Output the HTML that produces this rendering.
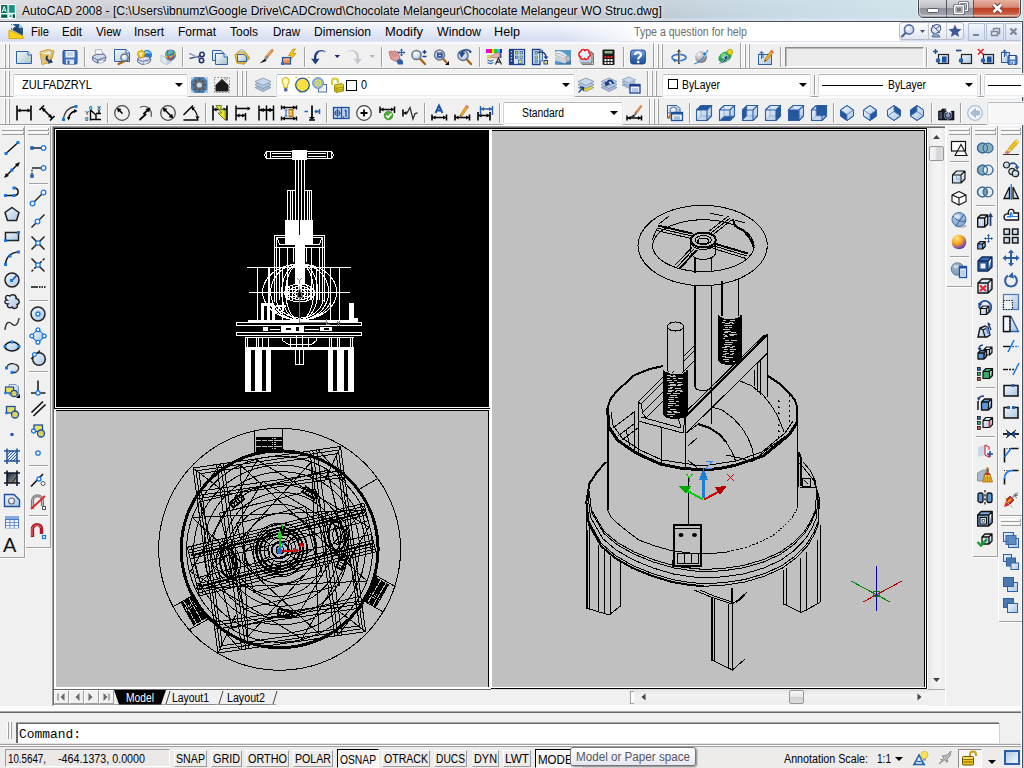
<!DOCTYPE html>
<html>
<head>
<meta charset="utf-8">
<title>AutoCAD 2008</title>
<style>
html,body{margin:0;padding:0;}
body{width:1024px;height:768px;overflow:hidden;background:#f0f0f0;font-family:"Liberation Sans",sans-serif;font-size:12px;color:#000;position:relative;}
.a{position:absolute;}
.t{position:absolute;white-space:nowrap;line-height:1.15;}
svg{position:absolute;overflow:visible;}
.combo{position:absolute;background:#fff;border:1px solid;border-color:#b4b6ba #e2e5ea #e9ecf0 #d4d8de;border-radius:2px;box-sizing:border-box;box-shadow:0 0 0 1px #f7f8fa;}
.arr{position:absolute;width:0;height:0;border-left:4px solid transparent;border-right:4px solid transparent;border-top:4px solid #000;}
</style>
</head>
<body>
<div class="a" style="left:0px;top:0px;width:1024px;height:22px;background:linear-gradient(#d9dadf 0%,#cbccd2 40%,#b9bac1 100%);"></div>
<div class="a" style="left:0px;top:0px;width:1024px;height:22px;background:linear-gradient(90deg,rgba(255,255,255,0.25) 0%,rgba(200,200,205,0) 6%,rgba(190,190,196,0.25) 30%,rgba(196,198,204,0.1) 55%,rgba(190,208,220,0.6) 64%,rgba(200,220,232,0.85) 74%,rgba(208,228,236,0.9) 88%,rgba(214,232,238,0.85) 100%);"></div>
<div class="a" style="left:0px;top:18px;width:1024px;height:3px;background:linear-gradient(rgba(255,255,255,0.15),rgba(235,240,246,0.55));"></div>
<div class="a" style="left:0px;top:21px;width:1024px;height:1px;background:#4a525e;"></div>
<svg style="left:0px;top:3.5px;" width="16" height="15"><rect x="0" y="0" width="16" height="15" fill="#fff"/><rect x="1" y="1" width="14" height="13" fill="#35b3a2"/><rect x="1" y="1" width="6.500" height="8" fill="#176f60"/><path d="M2.200 8 L4.200 2.500 L6.200 8 M3 6.200h2.400" stroke="#e8fff8" stroke-width="1" fill="none"/><rect x="7.500" y="1" width="1.200" height="13" fill="#e8fff8"/><rect x="1" y="9" width="14" height="1.200" fill="#e8fff8"/><rect x="9.500" y="1.500" width="4.500" height="6.500" fill="#1f8b79"/><rect x="9" y="10.800" width="3" height="2.700" fill="none" stroke="#fff" stroke-width="1"/><rect x="1.500" y="11" width="5.500" height="2.500" fill="#10564a"/><rect x="13" y="10.500" width="2" height="3.500" fill="#10564a"/><rect x="10" y="11.500" width="1.200" height="1.200" fill="#176f60"/></svg>
<div class="t" style="left:22px;top:4.5px;font-size:12px;color:#000;transform:scaleX(1.0024);transform-origin:0 0;text-shadow:0 0 6px rgba(255,255,255,0.9),0 0 3px rgba(255,255,255,0.7);">AutoCAD 2008 - [C:\Users\ibnumz\Google Drive\CADCrowd\Chocolate Melangeur\Chocolate Melangeur WO Struc.dwg]</div>
<div class="a" style="left:918px;top:-1px;width:103px;height:19px;box-sizing:border-box;border:1px solid #46484f;border-radius:0 0 5px 5px;overflow:hidden;box-shadow:0 0 0 1px rgba(255,255,255,0.55);"><div class="a" style="left:0;top:0;width:27px;height:17px;background:linear-gradient(#d6d7dc 0%,#bcbdc4 45%,#8f909a 50%,#a9abb6 100%);border-right:1px solid #55575f"></div><div class="a" style="left:28px;top:0;width:26px;height:17px;background:linear-gradient(#d6d7dc 0%,#bcbdc4 45%,#8f909a 50%,#a9abb6 100%);border-right:1px solid #55575f"></div><div class="a" style="left:55px;top:0;width:47px;height:17px;background:linear-gradient(#e7b0a0 0%,#d58a76 42%,#c13f23 50%,#c6553a 75%,#d9907a 100%)"></div><div class="a" style="left:0;top:0;width:101px;height:16px;border:1px solid rgba(255,255,255,0.45);border-top:none;border-radius:0 0 4px 4px;box-sizing:border-box"></div></div>
<svg style="left:918px;top:0px;" width="103" height="18"><rect x="9.5" y="8.5" width="11" height="4" rx="1" fill="#fff" stroke="#5a5c66" stroke-width="1"/><rect x="41.5" y="2.5" width="8" height="8" rx="1" fill="none" stroke="#5a5c66" stroke-width="3"/><rect x="41.5" y="2.5" width="8" height="8" rx="1" fill="none" stroke="#fff" stroke-width="1.4"/><rect x="36.5" y="5.500" width="9" height="8" rx="1" fill="#b4b5bd" stroke="#5a5c66" stroke-width="3"/><rect x="36.5" y="5.5" width="9" height="8" rx="1" fill="#a8a9b3" stroke="#fff" stroke-width="1.4"/><rect x="39.5" y="8.5" width="3" height="2.5" fill="#777" stroke="#666" stroke-width="0.5"/><path d="M75.500 4.500 L83.500 12 M83.500 4.500 L75.500 12" stroke="#6a3a34" stroke-width="4.600" stroke-linecap="butt" fill="none"/><path d="M75.500 4.500 L83.500 12 M83.500 4.500 L75.500 12" stroke="#fff" stroke-width="2.800" stroke-linecap="butt" fill="none"/></svg>
<div class="a" style="left:0px;top:22px;width:1022px;height:21px;background:linear-gradient(#f6f8fd 0%,#e9edf8 35%,#dfe5f4 60%,#d2daee 100%);"></div>
<div class="a" style="left:0px;top:22px;width:1022px;height:1px;background:#fdfdfe;"></div>
<div class="a" style="left:0px;top:41px;width:1022px;height:1px;background:#e2e6f0;"></div>
<div class="a" style="left:0px;top:42px;width:1022px;height:1px;background:#f6f7fa;"></div>
<svg style="left:8px;top:23px;" width="16" height="17"><path d="M1 7 L1 15.5 L15 15.5 L15 13 Z" fill="#f7d21a" stroke="#d9a800" stroke-width="1"/><path d="M3 1 L11 1 L15 5 L15 12.5 L3 6.5 Z" fill="#2a5a86"/><path d="M11 1 L15 5 L11 5 Z" fill="#9fc0dc"/><path d="M4 3 L10 3 L10 5.5 L13.500 9 L13.5 11 L4 6 Z" fill="#1b4466"/><circle cx="4.5" cy="3.5" r="1.6" fill="none" stroke="#fff" stroke-width="1"/><path d="M4.5 0.5v6M1.5 3.5h6" stroke="#fff" stroke-width="0.8"/></svg>
<div class="t" style="left:31px;top:26px;font-size:12px;color:#000;transform:scaleX(0.9305);transform-origin:0 0;">File</div>
<div class="t" style="left:62px;top:26px;font-size:12px;color:#000;transform:scaleX(0.9669);transform-origin:0 0;">Edit</div>
<div class="t" style="left:96px;top:26px;font-size:12px;color:#000;transform:scaleX(0.9690);transform-origin:0 0;">View</div>
<div class="t" style="left:134px;top:26px;font-size:12px;color:#000;transform:scaleX(0.9993);transform-origin:0 0;">Insert</div>
<div class="t" style="left:178px;top:26px;font-size:12px;color:#000;transform:scaleX(0.9997);transform-origin:0 0;">Format</div>
<div class="t" style="left:230px;top:26px;font-size:12px;color:#000;transform:scaleX(0.9992);transform-origin:0 0;">Tools</div>
<div class="t" style="left:273px;top:26px;font-size:12px;color:#000;transform:scaleX(0.9640);transform-origin:0 0;">Draw</div>
<div class="t" style="left:314px;top:26px;font-size:12px;color:#000;transform:scaleX(1.0052);transform-origin:0 0;">Dimension</div>
<div class="t" style="left:385px;top:26px;font-size:12px;color:#000;transform:scaleX(1.0749);transform-origin:0 0;">Modify</div>
<div class="t" style="left:437px;top:26px;font-size:12px;color:#000;transform:scaleX(1.0307);transform-origin:0 0;">Window</div>
<div class="t" style="left:494px;top:26px;font-size:12px;color:#000;transform:scaleX(1.0532);transform-origin:0 0;">Help</div>
<div class="a" style="left:632px;top:23px;width:268px;height:18px;background:#fff;border-radius:2px 0 0 2px;"></div>
<div class="a" style="left:560px;top:23px;width:72px;height:18px;background:linear-gradient(90deg,rgba(255,255,255,0),rgba(255,255,255,0.8));"></div>
<div class="t" style="left:634px;top:26px;font-size:12px;color:#6d6d6d;transform:scaleX(0.8819);transform-origin:0 0;">Type a question for help</div>
<div class="a" style="left:899px;top:22px;width:65px;height:18px;box-sizing:border-box;border:1px solid #b9bcc6;border-radius:3px;background:linear-gradient(#fdfdfe,#eef0f6 60%,#e3e6ef)"></div>
<div class="a" style="left:928px;top:23px;width:1px;height:16px;background:#c3c6cf;"></div>
<div class="a" style="left:946px;top:23px;width:1px;height:16px;background:#c3c6cf;"></div>
<svg style="left:899px;top:22px;" width="65" height="18"><circle cx="10" cy="7.5" r="4.6" fill="#d4def0" stroke="#5873a8" stroke-width="1.6"/><circle cx="9" cy="6.500" r="2" fill="#fff" opacity="0.8"/><path d="M6.500 11 L3 14.5" stroke="#48639a" stroke-width="2.2" stroke-linecap="round"/><path d="M21 8 h5 l-2.5 3 z" fill="#555"/><ellipse cx="37" cy="7" rx="5" ry="4" transform="rotate(-35 37 7)" fill="#dfe6f3" stroke="#4a5f93" stroke-width="1.2"/><path d="M33 3 L41 11 M37 7 L41.5 3" stroke="#4a5f93" stroke-width="1"/><path d="M35 11 L33 15 h8 l-2 -3" fill="#8fa2c8" stroke="#4a5f93" stroke-width="0.8"/><path d="M56 2.5 l1.900 4.300 4.700 0.400 -3.600 3.100 1.100 4.600 -4.100 -2.500 -4.100 2.500 1.100 -4.600 -3.600 -3.100 4.700 -0.400z" fill="#3f5a96"/></svg>
<div class="a" style="left:968px;top:23px;width:17px;height:18px;box-sizing:border-box;border:1px solid #b6c0d4;background:linear-gradient(#f3f7fd,#dfe8f6 55%,#d3dff1)"></div>
<div class="a" style="left:986px;top:23px;width:18px;height:18px;box-sizing:border-box;border:1px solid #b6c0d4;background:linear-gradient(#f3f7fd,#dfe8f6 55%,#d3dff1)"></div>
<div class="a" style="left:1005px;top:23px;width:17px;height:18px;box-sizing:border-box;border:1px solid #b6c0d4;background:linear-gradient(#f3f7fd,#dfe8f6 55%,#d3dff1)"></div>
<svg style="left:968px;top:23px;" width="56" height="18"><rect x="5" y="11" width="6" height="2" fill="#7f8594"/><path d="M25.500 5.500 h6 v5 h-2 M25.500 5.500 v2" stroke="#7f8594" stroke-width="1.500" fill="none"/><rect x="23.500" y="8.500" width="6" height="4" fill="none" stroke="#7f8594" stroke-width="1.500"/><path d="M42.5 5.500 l6 6 M48.5 5.500 l-6 6" stroke="#7f8594" stroke-width="2.2"/></svg>
<div class="a" style="left:1022px;top:22px;width:1px;height:746px;background:#48525e;"></div>
<div class="a" style="left:1023px;top:0px;width:1px;height:768px;background:#c3cfdf;"></div>
<div class="a" style="left:1021px;top:22px;width:1px;height:746px;background:#fff;"></div>
<div class="a" style="left:0px;top:43px;width:1021px;height:1px;background:#fcfcfc;"></div>
<div class="a" style="left:0px;top:68px;width:1021px;height:1px;background:#a0a0a0;"></div>
<div class="a" style="left:0px;top:69px;width:1021px;height:1px;background:#fff;"></div>
<div class="a" style="left:0px;top:96px;width:1021px;height:1px;background:#a0a0a0;"></div>
<div class="a" style="left:0px;top:97px;width:1021px;height:1px;background:#fff;"></div>
<div class="a" style="left:0px;top:124px;width:1021px;height:1px;background:#a0a0a0;"></div>
<div class="a" style="left:0px;top:125px;width:1021px;height:1px;background:#fff;"></div>
<div class="a" style="left:4px;top:44px;width:1px;height:24px;background:#fff;"></div><div class="a" style="left:5px;top:44px;width:1px;height:24px;background:#a0a0a0;"></div><div class="a" style="left:8px;top:44px;width:1px;height:24px;background:#fff;"></div><div class="a" style="left:9px;top:44px;width:1px;height:24px;background:#a0a0a0;"></div>
<div class="a" style="left:84px;top:47px;width:1px;height:20px;background:#a0a0a0;"></div><div class="a" style="left:85px;top:47px;width:1px;height:20px;background:#fff;"></div>
<div class="a" style="left:182px;top:47px;width:1px;height:20px;background:#a0a0a0;"></div><div class="a" style="left:183px;top:47px;width:1px;height:20px;background:#fff;"></div>
<div class="a" style="left:304px;top:47px;width:1px;height:20px;background:#a0a0a0;"></div><div class="a" style="left:305px;top:47px;width:1px;height:20px;background:#fff;"></div>
<div class="a" style="left:381px;top:47px;width:1px;height:20px;background:#a0a0a0;"></div><div class="a" style="left:382px;top:47px;width:1px;height:20px;background:#fff;"></div>
<div class="a" style="left:479px;top:47px;width:1px;height:20px;background:#a0a0a0;"></div><div class="a" style="left:480px;top:47px;width:1px;height:20px;background:#fff;"></div>
<div class="a" style="left:623px;top:47px;width:1px;height:20px;background:#a0a0a0;"></div><div class="a" style="left:624px;top:47px;width:1px;height:20px;background:#fff;"></div>
<div class="a" style="left:653px;top:43px;width:1px;height:25px;background:#a0a0a0;"></div><div class="a" style="left:654px;top:43px;width:1px;height:25px;background:#fff;"></div>
<div class="a" style="left:657px;top:44px;width:1px;height:24px;background:#fff;"></div><div class="a" style="left:658px;top:44px;width:1px;height:24px;background:#a0a0a0;"></div><div class="a" style="left:661px;top:44px;width:1px;height:24px;background:#fff;"></div><div class="a" style="left:662px;top:44px;width:1px;height:24px;background:#a0a0a0;"></div>
<div class="a" style="left:740px;top:43px;width:1px;height:25px;background:#a0a0a0;"></div><div class="a" style="left:741px;top:43px;width:1px;height:25px;background:#fff;"></div>
<div class="a" style="left:744px;top:44px;width:1px;height:24px;background:#fff;"></div><div class="a" style="left:745px;top:44px;width:1px;height:24px;background:#a0a0a0;"></div><div class="a" style="left:748px;top:44px;width:1px;height:24px;background:#fff;"></div><div class="a" style="left:749px;top:44px;width:1px;height:24px;background:#a0a0a0;"></div>
<div class="a" style="left:780px;top:47px;width:1px;height:20px;background:#a0a0a0;"></div><div class="a" style="left:781px;top:47px;width:1px;height:20px;background:#fff;"></div>
<div class="a" style="left:926px;top:47px;width:1px;height:20px;background:#a0a0a0;"></div><div class="a" style="left:927px;top:47px;width:1px;height:20px;background:#fff;"></div>
<div class="a" style="left:785px;top:47px;width:139px;height:20px;box-sizing:border-box;border:1px solid;border-color:#8c8c8c #fff #fff #8c8c8c;background:#ebebeb;box-shadow:inset 1px 1px 0 #b8b8b8"></div>
<div class="a" style="left:4px;top:71px;width:1px;height:25px;background:#fff;"></div><div class="a" style="left:5px;top:71px;width:1px;height:25px;background:#a0a0a0;"></div><div class="a" style="left:8px;top:71px;width:1px;height:25px;background:#fff;"></div><div class="a" style="left:9px;top:71px;width:1px;height:25px;background:#a0a0a0;"></div>
<div class="combo" style="left:13px;top:74px;width:175px;height:22px"></div>
<div class="t" style="left:22px;top:79px;font-size:12px;color:#000;transform:scaleX(0.9152);transform-origin:0 0;">ZULFADZRYL</div>
<div class="arr" style="left:175px;top:83px"></div>
<div class="a" style="left:237px;top:71px;width:1px;height:25px;background:#a0a0a0;"></div><div class="a" style="left:238px;top:71px;width:1px;height:25px;background:#fff;"></div>
<div class="a" style="left:241px;top:71px;width:1px;height:25px;background:#fff;"></div><div class="a" style="left:242px;top:71px;width:1px;height:25px;background:#a0a0a0;"></div><div class="a" style="left:245px;top:71px;width:1px;height:25px;background:#fff;"></div><div class="a" style="left:246px;top:71px;width:1px;height:25px;background:#a0a0a0;"></div>
<div class="combo" style="left:276px;top:74px;width:299px;height:22px"></div>
<div class="t" style="left:361px;top:79px;font-size:12px;color:#000;transform:scaleX(0.8988);transform-origin:0 0;">0</div>
<div class="arr" style="left:562px;top:83px"></div>
<div class="a" style="left:647px;top:71px;width:1px;height:25px;background:#a0a0a0;"></div><div class="a" style="left:648px;top:71px;width:1px;height:25px;background:#fff;"></div>
<div class="a" style="left:651px;top:71px;width:1px;height:25px;background:#fff;"></div><div class="a" style="left:652px;top:71px;width:1px;height:25px;background:#a0a0a0;"></div><div class="a" style="left:655px;top:71px;width:1px;height:25px;background:#fff;"></div><div class="a" style="left:656px;top:71px;width:1px;height:25px;background:#a0a0a0;"></div>
<div class="combo" style="left:662px;top:74px;width:149px;height:22px"></div>
<div class="a" style="left:668px;top:79px;width:10px;height:10px;background:#fff;border:1px solid #000;box-sizing:border-box;"></div>
<div class="t" style="left:682px;top:79px;font-size:12px;color:#000;transform:scaleX(0.8631);transform-origin:0 0;">ByLayer</div>
<div class="arr" style="left:799px;top:83px"></div>
<div class="a" style="left:814px;top:75px;width:1px;height:20px;background:#a0a0a0;"></div><div class="a" style="left:815px;top:75px;width:1px;height:20px;background:#fff;"></div>
<div class="combo" style="left:818px;top:74px;width:160px;height:22px"></div>
<div class="a" style="left:822px;top:85px;width:61px;height:1px;background:#000;"></div>
<div class="t" style="left:888px;top:79px;font-size:12px;color:#000;transform:scaleX(0.8631);transform-origin:0 0;">ByLayer</div>
<div class="arr" style="left:965px;top:83px"></div>
<div class="a" style="left:980px;top:75px;width:1px;height:20px;background:#a0a0a0;"></div><div class="a" style="left:981px;top:75px;width:1px;height:20px;background:#fff;"></div>
<div class="combo" style="left:984px;top:74px;width:45px;height:22px"></div>
<div class="a" style="left:988px;top:85px;width:33px;height:1px;background:#000;"></div>
<div class="a" style="left:4px;top:99px;width:1px;height:25px;background:#fff;"></div><div class="a" style="left:5px;top:99px;width:1px;height:25px;background:#a0a0a0;"></div><div class="a" style="left:8px;top:99px;width:1px;height:25px;background:#fff;"></div><div class="a" style="left:9px;top:99px;width:1px;height:25px;background:#a0a0a0;"></div>
<div class="a" style="left:107px;top:103px;width:1px;height:20px;background:#a0a0a0;"></div><div class="a" style="left:108px;top:103px;width:1px;height:20px;background:#fff;"></div>
<div class="a" style="left:205px;top:103px;width:1px;height:20px;background:#a0a0a0;"></div><div class="a" style="left:206px;top:103px;width:1px;height:20px;background:#fff;"></div>
<div class="a" style="left:326px;top:103px;width:1px;height:20px;background:#a0a0a0;"></div><div class="a" style="left:327px;top:103px;width:1px;height:20px;background:#fff;"></div>
<div class="a" style="left:424px;top:103px;width:1px;height:20px;background:#a0a0a0;"></div><div class="a" style="left:425px;top:103px;width:1px;height:20px;background:#fff;"></div>
<div class="a" style="left:499px;top:103px;width:1px;height:20px;background:#a0a0a0;"></div><div class="a" style="left:500px;top:103px;width:1px;height:20px;background:#fff;"></div>
<div class="combo" style="left:503px;top:102px;width:120px;height:22px"></div>
<div class="t" style="left:522px;top:107px;font-size:12px;color:#000;transform:scaleX(0.8622);transform-origin:0 0;">Standard</div>
<div class="arr" style="left:610px;top:111px"></div>
<div class="a" style="left:649px;top:99px;width:1px;height:25px;background:#a0a0a0;"></div><div class="a" style="left:650px;top:99px;width:1px;height:25px;background:#fff;"></div>
<div class="a" style="left:653px;top:99px;width:1px;height:25px;background:#fff;"></div><div class="a" style="left:654px;top:99px;width:1px;height:25px;background:#a0a0a0;"></div><div class="a" style="left:657px;top:99px;width:1px;height:25px;background:#fff;"></div><div class="a" style="left:658px;top:99px;width:1px;height:25px;background:#a0a0a0;"></div>
<div class="a" style="left:689px;top:103px;width:1px;height:20px;background:#a0a0a0;"></div><div class="a" style="left:690px;top:103px;width:1px;height:20px;background:#fff;"></div>
<div class="a" style="left:833px;top:103px;width:1px;height:20px;background:#a0a0a0;"></div><div class="a" style="left:834px;top:103px;width:1px;height:20px;background:#fff;"></div>
<div class="a" style="left:931px;top:103px;width:1px;height:20px;background:#a0a0a0;"></div><div class="a" style="left:932px;top:103px;width:1px;height:20px;background:#fff;"></div>
<div class="a" style="left:960px;top:103px;width:1px;height:20px;background:#a0a0a0;"></div><div class="a" style="left:961px;top:103px;width:1px;height:20px;background:#fff;"></div>
<div class="combo" style="left:987px;top:102px;width:40px;height:22px;background:#f7f7f7"></div>
<div class="a" style="left:2px;top:128px;width:21px;height:1px;background:#fff;"></div><div class="a" style="left:2px;top:130px;width:21px;height:1px;background:#a0a0a0;"></div><div class="a" style="left:23px;top:128px;width:1px;height:3px;background:#a0a0a0;"></div><div class="a" style="left:2px;top:132px;width:21px;height:1px;background:#fff;"></div><div class="a" style="left:2px;top:134px;width:21px;height:1px;background:#a0a0a0;"></div><div class="a" style="left:23px;top:132px;width:1px;height:3px;background:#a0a0a0;"></div>
<div class="a" style="left:28px;top:128px;width:20px;height:1px;background:#fff;"></div><div class="a" style="left:28px;top:130px;width:20px;height:1px;background:#a0a0a0;"></div><div class="a" style="left:48px;top:128px;width:1px;height:3px;background:#a0a0a0;"></div><div class="a" style="left:28px;top:132px;width:20px;height:1px;background:#fff;"></div><div class="a" style="left:28px;top:134px;width:20px;height:1px;background:#a0a0a0;"></div><div class="a" style="left:48px;top:132px;width:1px;height:3px;background:#a0a0a0;"></div>
<div class="a" style="left:24px;top:126px;width:1px;height:432px;background:#a0a0a0;"></div>
<div class="a" style="left:25px;top:126px;width:1px;height:432px;background:#fff;"></div>
<div class="a" style="left:0px;top:557px;width:25px;height:1px;background:#a0a0a0;"></div>
<div class="a" style="left:0px;top:558px;width:25px;height:1px;background:#fff;"></div>
<div class="a" style="left:50px;top:126px;width:1px;height:421px;background:#a0a0a0;"></div>
<div class="a" style="left:26px;top:547px;width:25px;height:1px;background:#a0a0a0;"></div>
<div class="a" style="left:26px;top:548px;width:25px;height:1px;background:#fff;"></div>
<div class="a" style="left:29px;top:183px;width:19px;height:1px;background:#a0a0a0;"></div><div class="a" style="left:29px;top:184px;width:19px;height:1px;background:#fff;"></div>
<div class="a" style="left:29px;top:300px;width:19px;height:1px;background:#a0a0a0;"></div><div class="a" style="left:29px;top:301px;width:19px;height:1px;background:#fff;"></div>
<div class="a" style="left:29px;top:371px;width:19px;height:1px;background:#a0a0a0;"></div><div class="a" style="left:29px;top:372px;width:19px;height:1px;background:#fff;"></div>
<div class="a" style="left:29px;top:465px;width:19px;height:1px;background:#a0a0a0;"></div><div class="a" style="left:29px;top:466px;width:19px;height:1px;background:#fff;"></div>
<div class="a" style="left:29px;top:515px;width:19px;height:1px;background:#a0a0a0;"></div><div class="a" style="left:29px;top:516px;width:19px;height:1px;background:#fff;"></div>
<div class="a" style="left:945px;top:126px;width:1px;height:580px;background:#fff;"></div>
<div class="a" style="left:949px;top:128px;width:20px;height:1px;background:#fff;"></div><div class="a" style="left:949px;top:130px;width:20px;height:1px;background:#a0a0a0;"></div><div class="a" style="left:969px;top:128px;width:1px;height:3px;background:#a0a0a0;"></div><div class="a" style="left:949px;top:132px;width:20px;height:1px;background:#fff;"></div><div class="a" style="left:949px;top:134px;width:20px;height:1px;background:#a0a0a0;"></div><div class="a" style="left:969px;top:132px;width:1px;height:3px;background:#a0a0a0;"></div>
<div class="a" style="left:975px;top:128px;width:20px;height:1px;background:#fff;"></div><div class="a" style="left:975px;top:130px;width:20px;height:1px;background:#a0a0a0;"></div><div class="a" style="left:995px;top:128px;width:1px;height:3px;background:#a0a0a0;"></div><div class="a" style="left:975px;top:132px;width:20px;height:1px;background:#fff;"></div><div class="a" style="left:975px;top:134px;width:20px;height:1px;background:#a0a0a0;"></div><div class="a" style="left:995px;top:132px;width:1px;height:3px;background:#a0a0a0;"></div>
<div class="a" style="left:1001px;top:128px;width:19px;height:1px;background:#fff;"></div><div class="a" style="left:1001px;top:130px;width:19px;height:1px;background:#a0a0a0;"></div><div class="a" style="left:1020px;top:128px;width:1px;height:3px;background:#a0a0a0;"></div><div class="a" style="left:1001px;top:132px;width:19px;height:1px;background:#fff;"></div><div class="a" style="left:1001px;top:134px;width:19px;height:1px;background:#a0a0a0;"></div><div class="a" style="left:1020px;top:132px;width:1px;height:3px;background:#a0a0a0;"></div>
<div class="a" style="left:946px;top:126px;width:1px;height:160px;background:#fff;"></div>
<div class="a" style="left:971px;top:126px;width:1px;height:160px;background:#a0a0a0;"></div>
<div class="a" style="left:947px;top:286px;width:25px;height:1px;background:#a0a0a0;"></div>
<div class="a" style="left:947px;top:287px;width:25px;height:1px;background:#fff;"></div>
<div class="a" style="left:972px;top:126px;width:1px;height:430px;background:#fff;"></div>
<div class="a" style="left:997px;top:126px;width:1px;height:430px;background:#a0a0a0;"></div>
<div class="a" style="left:973px;top:556px;width:25px;height:1px;background:#a0a0a0;"></div>
<div class="a" style="left:973px;top:557px;width:25px;height:1px;background:#fff;"></div>
<div class="a" style="left:998px;top:126px;width:1px;height:496px;background:#fff;"></div>
<div class="a" style="left:950px;top:161px;width:19px;height:1px;background:#a0a0a0;"></div><div class="a" style="left:950px;top:162px;width:19px;height:1px;background:#fff;"></div>
<div class="a" style="left:950px;top:256px;width:19px;height:1px;background:#a0a0a0;"></div><div class="a" style="left:950px;top:257px;width:19px;height:1px;background:#fff;"></div>
<div class="a" style="left:976px;top:205px;width:19px;height:1px;background:#a0a0a0;"></div><div class="a" style="left:976px;top:206px;width:19px;height:1px;background:#fff;"></div>
<div class="a" style="left:976px;top:387px;width:19px;height:1px;background:#a0a0a0;"></div><div class="a" style="left:976px;top:388px;width:19px;height:1px;background:#fff;"></div>
<div class="a" style="left:976px;top:436px;width:19px;height:1px;background:#a0a0a0;"></div><div class="a" style="left:976px;top:437px;width:19px;height:1px;background:#fff;"></div>
<div class="a" style="left:999px;top:515px;width:23px;height:1px;background:#a0a0a0;"></div>
<div class="a" style="left:999px;top:516px;width:23px;height:1px;background:#fff;"></div>
<div class="a" style="left:1001px;top:519px;width:19px;height:1px;background:#fff;"></div><div class="a" style="left:1001px;top:521px;width:19px;height:1px;background:#a0a0a0;"></div><div class="a" style="left:1020px;top:519px;width:1px;height:3px;background:#a0a0a0;"></div><div class="a" style="left:1001px;top:523px;width:19px;height:1px;background:#fff;"></div><div class="a" style="left:1001px;top:525px;width:19px;height:1px;background:#a0a0a0;"></div><div class="a" style="left:1020px;top:523px;width:1px;height:3px;background:#a0a0a0;"></div>
<div class="a" style="left:999px;top:621px;width:23px;height:1px;background:#a0a0a0;"></div>
<div class="a" style="left:999px;top:622px;width:23px;height:1px;background:#fff;"></div>
<div class="a" style="left:54px;top:128px;width:874px;height:562px;background:#fff;"></div>
<div class="a" style="left:52px;top:126px;width:893px;height:1px;background:#a0a0a0;"></div>
<div class="a" style="left:53px;top:127px;width:892px;height:1px;background:#696969;"></div>
<div class="a" style="left:52px;top:126px;width:1px;height:580px;background:#a0a0a0;"></div>
<div class="a" style="left:53px;top:127px;width:1px;height:578px;background:#696969;"></div>
<div class="a" style="left:54px;top:128px;width:873px;height:1px;background:#000;"></div>
<div class="a" style="left:54px;top:128px;width:1px;height:281px;background:#000;"></div>
<div class="a" style="left:54px;top:408px;width:436px;height:1px;background:#000;"></div>
<div class="a" style="left:56px;top:130px;width:433px;height:277px;background:#000;"></div>
<div class="a" style="left:56px;top:410px;width:433px;height:277px;background:#c0c0c0;box-sizing:border-box;border-top:1px solid #000;border-right:1px solid #000;"></div>
<div class="a" style="left:492px;top:130px;width:433px;height:557px;background:#c0c0c0;box-sizing:border-box;border-top:1px solid #000;border-right:1px solid #000;"></div>
<div class="a" style="left:926px;top:128px;width:1px;height:561px;background:#000;"></div>
<div class="a" style="left:491px;top:688px;width:436px;height:1px;background:#000;"></div>
<div class="a" style="left:54px;top:689px;width:437px;height:1px;background:#696969;"></div>
<div class="a" style="left:491px;top:689px;width:437px;height:1px;background:#dcdcdc;"></div>
<svg style="left:0px;top:0px;" width="1024" height="768"><g shape-rendering="crispEdges"><path d="M266.5 151.5 H331.5 V158.5 H266.5 Z M266.5 151.5 L264.5 155 L266.5 158.5 M331.5 151.5 L333.5 155 L331.5 158.5 M270.5 151.5 L270.5 158.5 M327.5 151.5 L327.5 158.5 M272 153.5 L291 153.5 M272 156.5 L291 156.5 M308 153.5 L326 153.5 M308 156.5 L326 156.5 M295.5 160 L295.5 190 M304.5 160 L304.5 190 M298.5 160 L298.5 236 M301.5 160 L301.5 236 M287.5 190.5 H295.5 V220 H287.5 Z M304.5 190.5 H311.5 V220 H304.5 Z M290.5 190.5 L290.5 220 M292.5 190.5 L292.5 220 M307.5 190.5 L307.5 220 M309.5 190.5 L309.5 220 M274.5 302 L274.5 235.5 L324.5 235.5 L324.5 302 M276.5 302 L276.5 237.5 L322.5 237.5 L322.5 302 M277.5 238 L279.5 244.5 L319.5 244.5 L321.5 238 M274.5 247.5 L324.5 247.5 M279.5 247.5 L279.5 300 M287.5 247.5 L287.5 300 M311.5 247.5 L311.5 300 M319.5 247.5 L319.5 300 M293.5 247.5 L293.5 262 M306.5 247.5 L306.5 262 M247 267.5 L351 267.5 M249 292.5 L350 292.5 M257.5 268 L257.5 321 M330.5 268 L330.5 321 M339.5 268 L339.5 321 M282.5 268 L282.5 321 M316.5 268 L316.5 300 M284 309 L284 309.4 L283.9 309.8 L283.8 310.1 L283.6 310.5 L283.4 310.8 L283.1 311.1 L282.8 311.4 L282.5 311.6 L282.1 311.8 L281.8 311.9 L281.4 312 L281 312 L280.6 312 L280.2 311.9 L279.9 311.8 L279.5 311.6 L279.2 311.4 L278.9 311.1 L278.6 310.8 L278.4 310.5 L278.2 310.1 L278.1 309.8 L278 309.4 L278 309 L278 308.6 L278.1 308.2 L278.2 307.9 L278.4 307.5 L278.6 307.2 L278.9 306.9 L279.2 306.6 L279.5 306.4 L279.9 306.2 L280.2 306.1 L280.6 306 L281 306 L281.4 306 L281.8 306.1 L282.1 306.2 L282.5 306.4 L282.8 306.6 L283.1 306.9 L283.4 307.2 L283.6 307.5 L283.8 307.9 L283.9 308.2 L284 308.6 L284 309 M236.5 322.5 H361.5 V325.5 H236.5 Z M236.5 332.5 H361.5 V335.5 H236.5 Z M270 329.5 L280 329.5 M305 329.5 L319 329.5 M245 337.5 L354 337.5 M245.5 337 L245.5 347 M247.5 337 L247.5 347 M256.5 337 L256.5 347 M258.5 337 L258.5 347 M262.5 337 L262.5 347 M268.5 337 L268.5 347 M329.5 337 L329.5 347 M331.5 337 L331.5 347 M337.5 337 L337.5 347 M339.5 337 L339.5 347 M350.5 337 L350.5 347 M352.5 337 L352.5 347 M282.5 338 L282.5 340.5 L288.5 344.5 L311.5 344.5 L316.5 340.5 L316.5 338 M290.5 338 L290.5 347 M308.5 338 L308.5 347 M296.5 336 L296.5 347 M302.5 336 L302.5 347 M295.5 350 L295.5 364.5 L303.5 364.5 L303.5 350 M299.5 350 L299.5 364 " fill="none" stroke="#fff" stroke-width="1"/><clipPath id="ctl"><rect x="240" y="240" width="120" height="81.5"/></clipPath><g clip-path="url(#ctl)"><path d="M336.7 292 L336.4 295.7 L335.4 299.2 L333.9 302.7 L331.7 306 L329.1 309 L325.9 311.8 L322.2 314.2 L318.2 316.2 L313.9 317.9 L309.3 319 L304.5 319.8 L299.7 320 L294.9 319.8 L290.1 319 L285.5 317.9 L281.2 316.2 L277.2 314.2 L273.5 311.8 L270.3 309 L267.7 306 L265.5 302.7 L264 299.2 L263 295.7 L262.7 292 L263 288.3 L264 284.8 L265.5 281.3 L267.7 278 L270.3 275 L273.5 272.2 L277.2 269.8 L281.2 267.8 L285.5 266.1 L290.1 265 L294.9 264.2 L299.7 264 L304.5 264.2 L309.3 265 L313.9 266.1 L318.2 267.8 L322.2 269.8 L325.9 272.2 L329.1 275 L331.7 278 L333.9 281.3 L335.4 284.8 L336.4 288.3 L336.7 292 M328.7 292 L328.5 295.7 L327.7 299.2 L326.5 302.7 L324.8 306 L322.7 309 L320.2 311.8 L317.4 314.2 L314.2 316.2 L310.8 317.9 L307.2 319 L303.5 319.8 L299.7 320 L295.9 319.8 L292.2 319 L288.6 317.9 L285.2 316.2 L282 314.2 L279.2 311.8 L276.7 309 L274.6 306 L272.9 302.7 L271.7 299.2 L270.9 295.7 L270.7 292 L270.9 288.3 L271.7 284.8 L272.9 281.3 L274.6 278 L276.7 275 L279.2 272.2 L282 269.8 L285.2 267.8 L288.6 266.1 L292.2 265 L295.9 264.2 L299.7 264 L303.5 264.2 L307.2 265 L310.8 266.1 L314.2 267.8 L317.4 269.8 L320.2 272.2 L322.7 275 L324.8 278 L326.5 281.3 L327.7 284.8 L328.5 288.3 L328.7 292 M317.7 292 L317.5 295.7 L317.1 299.2 L316.3 302.7 L315.3 306 L314 309 L312.4 311.8 L310.7 314.2 L308.7 316.2 L306.6 317.9 L304.4 319 L302 319.8 L299.7 320 L297.4 319.8 L295 319 L292.8 317.9 L290.7 316.2 L288.7 314.2 L287 311.8 L285.4 309 L284.1 306 L283.1 302.7 L282.3 299.2 L281.9 295.7 L281.7 292 L281.9 288.3 L282.3 284.8 L283.1 281.3 L284.1 278 L285.4 275 L287 272.2 L288.7 269.8 L290.7 267.8 L292.8 266.1 L295 265 L297.4 264.2 L299.7 264 L302 264.2 L304.4 265 L306.6 266.1 L308.7 267.8 L310.7 269.8 L312.4 272.2 L314 275 L315.3 278 L316.3 281.3 L317.1 284.8 L317.5 288.3 L317.7 292 M313.7 292 L313.6 295.7 L313.2 299.2 L312.6 302.7 L311.8 306 L310.8 309 L309.6 311.8 L308.2 314.2 L306.7 316.2 L305.1 317.9 L303.3 319 L301.5 319.8 L299.7 320 L297.9 319.8 L296.1 319 L294.3 317.9 L292.7 316.2 L291.2 314.2 L289.8 311.8 L288.6 309 L287.6 306 L286.8 302.7 L286.2 299.2 L285.8 295.7 L285.7 292 L285.8 288.3 L286.2 284.8 L286.8 281.3 L287.6 278 L288.6 275 L289.8 272.2 L291.2 269.8 L292.7 267.8 L294.3 266.1 L296.1 265 L297.9 264.2 L299.7 264 L301.5 264.2 L303.3 265 L305.1 266.1 L306.7 267.8 L308.2 269.8 L309.6 272.2 L310.8 275 L311.8 278 L312.6 281.3 L313.2 284.8 L313.6 288.3 L313.7 292 M330.7 301.6 L330.1 302.9 L329.4 304.2 L328.6 305.5 L327.8 306.7 L326.9 307.9 L325.9 309 L324.8 310.2 L323.7 311.2 L322.5 312.2 L321.3 313.2 L320 314.1 L318.6 314.9 L317.2 315.7 L315.8 316.4 L314.3 317.1 L312.8 317.7 L311.2 318.2 L309.6 318.7 L308 319.1 L306.4 319.4 L304.7 319.7 L303.1 319.9 L301.4 320 L299.7 320 L298 320 L296.3 319.9 L294.7 319.7 L293 319.4 L291.4 319.1 L289.8 318.7 L288.2 318.2 L286.6 317.7 L285.1 317.1 L283.6 316.4 L282.2 315.7 L280.8 314.9 L279.4 314.1 L278.1 313.2 L276.9 312.2 L275.7 311.2 L274.6 310.2 L273.5 309 L272.5 307.9 L271.6 306.7 L270.8 305.5 L270 304.2 L269.3 302.9 L268.7 301.6 M323.3 299.8 L323.1 301.1 L322.7 302.3 L322.3 303.5 L321.7 304.7 L321.1 305.9 L320.5 307 L319.8 308.1 L319 309.1 L318.1 310.1 L317.2 311.1 L316.2 312 L315.1 312.9 L314 313.6 L312.9 314.4 L311.7 315.1 L310.5 315.7 L309.2 316.2 L307.9 316.7 L306.6 317.1 L305.2 317.4 L303.9 317.7 L302.5 317.9 L301.1 318 L299.7 318 L298.3 318 L296.9 317.9 L295.5 317.7 L294.2 317.4 L292.8 317.1 L291.5 316.7 L290.2 316.2 L288.9 315.7 L287.7 315.1 L286.5 314.4 L285.4 313.6 L284.3 312.9 L283.2 312 L282.2 311.1 L281.3 310.1 L280.4 309.1 L279.6 308.1 L278.9 307 L278.3 305.9 L277.7 304.7 L277.1 303.5 L276.7 302.3 L276.3 301.1 L276.1 299.8 " fill="none" stroke="#fff" stroke-width="1"/></g><path d="M314.7 293 L314.6 294.2 L314.2 295.3 L313.6 296.4 L312.7 297.5 L311.6 298.5 L310.3 299.4 L308.8 300.1 L307.2 300.8 L305.4 301.3 L303.6 301.7 L301.7 301.9 L299.7 302 L297.7 301.9 L295.8 301.7 L294 301.3 L292.2 300.8 L290.6 300.1 L289.1 299.4 L287.8 298.5 L286.7 297.5 L285.8 296.4 L285.2 295.3 L284.8 294.2 L284.7 293 L284.8 291.8 L285.2 290.7 L285.8 289.6 L286.7 288.5 L287.8 287.5 L289.1 286.6 L290.6 285.9 L292.2 285.2 L294 284.7 L295.8 284.3 L297.7 284.1 L299.7 284 L301.7 284.1 L303.6 284.3 L305.4 284.7 L307.2 285.2 L308.8 285.9 L310.3 286.6 L311.6 287.5 L312.7 288.5 L313.6 289.6 L314.2 290.7 L314.6 291.8 L314.7 293 M310.7 293 L310.6 293.8 L310.3 294.7 L309.9 295.5 L309.2 296.2 L308.4 297 L307.5 297.6 L306.4 298.2 L305.2 298.6 L303.9 299 L302.5 299.3 L301.1 299.4 L299.7 299.5 L298.3 299.4 L296.9 299.3 L295.5 299 L294.2 298.6 L293 298.2 L291.9 297.6 L291 297 L290.2 296.2 L289.5 295.5 L289.1 294.7 L288.8 293.8 L288.7 293 L288.8 292.2 L289.1 291.3 L289.5 290.5 L290.2 289.8 L291 289 L291.9 288.4 L293 287.8 L294.2 287.4 L295.5 287 L296.9 286.7 L298.3 286.6 L299.7 286.5 L301.1 286.6 L302.5 286.7 L303.9 287 L305.2 287.4 L306.4 287.8 L307.5 288.4 L308.4 289 L309.2 289.8 L309.9 290.5 L310.3 291.3 L310.6 292.2 L310.7 293 M305.7 293 L305.6 293.5 L305.5 293.9 L305.2 294.3 L304.9 294.8 L304.5 295.1 L303.9 295.5 L303.4 295.8 L302.7 296 L302 296.2 L301.3 296.4 L300.5 296.5 L299.7 296.5 L298.9 296.5 L298.1 296.4 L297.4 296.2 L296.7 296 L296 295.8 L295.5 295.5 L294.9 295.1 L294.5 294.8 L294.2 294.3 L293.9 293.9 L293.8 293.5 L293.7 293 L293.8 292.5 L293.9 292.1 L294.2 291.7 L294.5 291.2 L294.9 290.9 L295.5 290.5 L296 290.2 L296.7 290 L297.4 289.8 L298.1 289.6 L298.9 289.5 L299.7 289.5 L300.5 289.5 L301.3 289.6 L302 289.8 L302.7 290 L303.4 290.2 L303.9 290.5 L304.5 290.9 L304.9 291.2 L305.2 291.7 L305.5 292.1 L305.6 292.5 L305.7 293 M286.5 286 L286.5 300 M289.5 286 L289.5 300 M292.5 286 L292.5 300 M295.5 286 L295.5 300 M298.5 286 L298.5 300 M301.5 286 L301.5 300 M304.5 286 L304.5 300 M307.5 286 L307.5 300 M310.5 286 L310.5 300 M313.5 286 L313.5 300 M285 289.5 L314 289.5 M285 296.5 L314 296.5 " fill="none" stroke="#fff" stroke-width="1"/><path d="M292 150 H307 V160 H292 Z M285 220 H298.6 V245 H285 Z M300.4 220 H313 V245 H300.4 Z M298 236 H301 V245 H298 Z M295 245 H305 V284 H295 Z M298 284 H302 V296 H298 Z M268 268 H270 V321 H268 Z M261 303 H274 V306 H261 Z M261 306 H264 V320 H261 Z M267 306 H270 V320 H267 Z M272 306 H275 V320 H272 Z M276 305 H286 V307 H276 Z M349 303 H354 V322 H349 Z M354 318 H358 V322 H354 Z M248 320 H358 V322 H248 Z M263 327 H268 V331 H263 Z M281 326 H304 V332 H281 Z M320 327 H332 V331 H320 Z M245 347 H354 V350 H245 Z M245 350 H271 V392 H245 Z M328 350 H354 V392 H328 Z " fill="#fff"/><path d="M286 328 H291 V330 H286 Z M296 327 H299 V331 H296 Z M324 328 H329 V330 H324 Z M251 350 H255 V391 H251 Z M262 350 H266 V391 H262 Z M333 350 H337 V391 H333 Z M344 350 H348 V391 H344 Z " fill="#000"/><path d="M299.5 296 V322.5 H328" fill="none" stroke="#808080" stroke-width="1"/><path d="M297 297 L299.5 288 L302.5 297 Z" fill="#000" stroke="#808080" stroke-width="1"/><path d="M297.5 278 l2 3 l2 -3 M299.5 281 v3" stroke="#808080" stroke-width="1" fill="none"/><path d="M326 319 v5 h4 M337 321 l3 5 M340 321 l-3 5" stroke="#808080" stroke-width="1" fill="none"/></g></svg><svg style="left:0px;top:0px;" width="1024" height="768"><g shape-rendering="crispEdges" fill="none" stroke="#000"><path d="M400.6 549.3 L400.1 559.8 L398.8 570.3 L396.5 580.6 L393.3 590.7 L389.3 600.4 L384.4 609.8 L378.7 618.7 L372.3 627.1 L365.2 634.9 L357.4 642 L349 648.4 L340.1 654.1 L330.7 659 L321 663 L310.9 666.2 L300.6 668.5 L290.1 669.8 L279.6 670.3 L269.1 669.8 L258.6 668.5 L248.3 666.2 L238.2 663 L228.5 659 L219.1 654.1 L210.2 648.4 L201.8 642 L194 634.9 L186.9 627.1 L180.5 618.7 L174.8 609.8 L169.9 600.4 L165.9 590.7 L162.7 580.6 L160.4 570.3 L159.1 559.8 L158.6 549.3 L159.1 538.8 L160.4 528.3 L162.7 518 L165.9 507.9 L169.9 498.2 L174.8 488.8 L180.5 479.9 L186.9 471.5 L194 463.7 L201.8 456.6 L210.2 450.2 L219.1 444.5 L228.5 439.6 L238.2 435.6 L248.3 432.4 L258.6 430.1 L269.1 428.8 L279.6 428.3 L290.1 428.8 L300.6 430.1 L310.9 432.4 L321 435.6 L330.7 439.6 L340.1 444.5 L349 450.2 L357.4 456.6 L365.2 463.7 L372.3 471.5 L378.7 479.9 L384.4 488.8 L389.3 498.2 L393.3 507.9 L396.5 518 L398.8 528.3 L400.1 538.8 L400.6 549.3 M372.6 549.3 L372.2 557.4 L371.2 565.4 L369.4 573.4 L367 581.1 L363.9 588.6 L360.1 595.8 L355.8 602.6 L350.8 609.1 L345.4 615.1 L339.4 620.5 L332.9 625.5 L326.1 629.8 L318.9 633.6 L311.4 636.7 L303.7 639.1 L295.7 640.9 L287.7 641.9 L279.6 642.3 L271.5 641.9 L263.5 640.9 L255.5 639.1 L247.8 636.7 L240.3 633.6 L233.1 629.8 L226.3 625.5 L219.8 620.5 L213.8 615.1 L208.4 609.1 L203.4 602.6 L199.1 595.8 L195.3 588.6 L192.2 581.1 L189.8 573.4 L188 565.4 L187 557.4 L186.6 549.3 L187 541.2 L188 533.2 L189.8 525.2 L192.2 517.5 L195.3 510 L199.1 502.8 L203.4 496 L208.4 489.5 L213.8 483.5 L219.8 478.1 L226.3 473.1 L233.1 468.8 L240.3 465 L247.8 461.9 L255.5 459.5 L263.5 457.7 L271.5 456.7 L279.6 456.3 L287.7 456.7 L295.7 457.7 L303.7 459.5 L311.4 461.9 L318.9 465 L326.1 468.8 L332.9 473.1 L339.4 478.1 L345.4 483.5 L350.8 489.5 L355.8 496 L360.1 502.8 L363.9 510 L367 517.5 L369.4 525.2 L371.2 533.2 L372.2 541.2 L372.6 549.3 M193 468 L340.5 446.5 L365.6 631.6 L218 653 Z M196.1 470.9 L338.3 450.1 L362.5 628.7 L220.2 649.4 Z M199.2 473.8 L336.2 453.8 L359.4 625.8 L222.3 645.7 Z M196.2 491.8 L343.7 470.3 M316.8 450 L341.8 635 M362.4 607.8 L214.8 629.2 M241.8 649.6 L216.7 464.5 M196.7 495.7 L344.3 474.2 M312.8 450.5 L337.9 635.6 M361.8 603.9 L214.3 625.3 M245.7 649 L220.7 464 M197.2 498.7 L344.7 477.2 M309.8 451 L334.9 636 M361.4 600.9 L213.8 622.3 M248.7 648.6 L223.7 463.5 M193 468 L224.3 491.8 M220.5 464 L196.8 495.8 M340.5 446.5 L323 484.3 M345.2 481.1 L318.3 449.7 M365.6 631.6 L334.3 607.7 M338 635.6 L361.8 603.7 M218 653 L235.6 615.2 M213.3 618.5 L240.2 649.8 M363 528.5 L364.7 537.2 L365.5 546 L365.3 554.8 L364.1 563.6 L362.1 572.2 L359.1 580.5 L355.3 588.6 L350.6 596.2 L345.1 603.2 L339 609.7 L332.2 615.5 L324.8 620.6 L316.9 625 L308.6 628.5 L300 631.1 L291.2 632.8 L282.2 633.6 L273.2 633.5 L264.3 632.5 L255.5 630.5 L247 627.7 L238.9 624 L231.2 619.5 L224.1 614.2 L217.5 608.2 L211.7 601.6 L206.5 594.4 L202.2 586.7 L198.7 578.5 L196.2 570.1 L194.5 561.4 L193.7 552.6 L193.9 543.8 L195.1 535 L197.1 526.4 L200.1 518.1 L203.9 510 L208.6 502.4 L214.1 495.4 L220.2 488.9 L227 483.1 L234.4 478 L242.3 473.6 L250.6 470.1 L259.2 467.5 L268 465.8 L277 465 L286 465.1 L294.9 466.1 L303.7 468.1 L312.2 470.9 L320.3 474.6 L328 479.1 L335.1 484.4 L341.7 490.4 L347.5 497 L352.7 504.2 L357 511.9 L360.5 520.1 L363 528.5 M357.3 529.4 L358.8 537.3 L359.5 545.3 L359.3 553.3 L358.3 561.2 L356.4 569 L353.7 576.6 L350.2 583.9 L346 590.8 L341 597.2 L335.5 603.1 L329.3 608.4 L322.6 613 L315.4 616.9 L307.9 620.1 L300.1 622.5 L292.1 624 L284 624.8 L275.8 624.7 L267.7 623.7 L259.8 622 L252.1 619.4 L244.7 616 L237.7 612 L231.2 607.2 L225.3 601.7 L220 595.7 L215.3 589.2 L211.4 582.2 L208.3 574.8 L205.9 567.2 L204.4 559.3 L203.7 551.3 L203.9 543.3 L204.9 535.4 L206.8 527.6 L209.5 520 L213 512.7 L217.2 505.8 L222.2 499.4 L227.7 493.5 L233.9 488.2 L240.6 483.6 L247.8 479.7 L255.3 476.5 L263.1 474.1 L271.1 472.6 L279.2 471.8 L287.4 471.9 L295.5 472.9 L303.4 474.6 L311.1 477.2 L318.5 480.6 L325.5 484.6 L332 489.4 L337.9 494.9 L343.2 500.9 L347.9 507.4 L351.8 514.4 L354.9 521.8 L357.3 529.4 M345.6 534.8 L346.9 541.7 L347.5 548.7 L347.3 555.6 L346.4 562.6 L344.8 569.4 L342.5 576 L339.4 582.3 L335.7 588.3 L331.4 593.9 L326.6 599.1 L321.2 603.7 L315.3 607.7 L309.1 611.1 L302.5 613.9 L295.7 616 L288.7 617.3 L281.7 618 L274.5 617.9 L267.5 617.1 L260.6 615.5 L253.9 613.3 L247.4 610.4 L241.4 606.8 L235.7 602.6 L230.5 597.9 L225.9 592.6 L221.8 586.9 L218.4 580.8 L215.7 574.4 L213.6 567.8 L212.3 560.9 L211.7 553.9 L211.9 547 L212.8 540 L214.4 533.2 L216.7 526.6 L219.8 520.3 L223.5 514.3 L227.8 508.7 L232.6 503.5 L238 498.9 L243.9 494.9 L250.1 491.5 L256.7 488.7 L263.5 486.6 L270.5 485.3 L277.5 484.6 L284.7 484.7 L291.7 485.5 L298.6 487.1 L305.3 489.3 L311.8 492.2 L317.8 495.8 L323.5 500 L328.7 504.7 L333.3 510 L337.4 515.7 L340.8 521.8 L343.5 528.2 L345.6 534.8 M337.9 535.3 L339 541.1 L339.5 547 L339.4 553 L338.6 558.9 L337.2 564.7 L335.2 570.4 L332.6 575.8 L329.5 580.9 L325.8 585.7 L321.6 590 L317.1 594 L312.1 597.4 L306.8 600.3 L301.2 602.7 L295.4 604.5 L289.4 605.6 L283.3 606.2 L277.3 606.1 L271.3 605.4 L265.4 604.1 L259.6 602.2 L254.2 599.7 L249 596.6 L244.2 593.1 L239.7 589 L235.8 584.6 L232.3 579.7 L229.4 574.5 L227.1 569 L225.3 563.3 L224.2 557.5 L223.7 551.6 L223.8 545.6 L224.6 539.7 L226 533.9 L228 528.2 L230.6 522.8 L233.7 517.7 L237.4 512.9 L241.6 508.6 L246.1 504.6 L251.1 501.2 L256.4 498.3 L262 495.9 L267.8 494.1 L273.8 493 L279.9 492.4 L285.9 492.5 L291.9 493.2 L297.8 494.5 L303.6 496.4 L309 498.9 L314.2 502 L319 505.5 L323.5 509.6 L327.4 514 L330.9 518.9 L333.8 524.1 L336.1 529.6 L337.9 535.3 M324.2 538.9 L325.1 543.7 L325.5 548.5 L325.4 553.3 L324.8 558.1 L323.7 562.8 L322 567.4 L319.9 571.8 L317.4 575.9 L314.4 579.8 L311.1 583.3 L307.3 586.5 L303.3 589.3 L299 591.7 L294.4 593.6 L289.7 595 L284.9 595.9 L280 596.4 L275.1 596.3 L270.2 595.8 L265.4 594.7 L260.8 593.1 L256.4 591.1 L252.2 588.7 L248.3 585.8 L244.7 582.5 L241.5 578.9 L238.7 574.9 L236.3 570.7 L234.4 566.3 L233 561.7 L232.1 556.9 L231.7 552.1 L231.8 547.3 L232.4 542.5 L233.5 537.8 L235.2 533.2 L237.3 528.8 L239.8 524.7 L242.8 520.8 L246.1 517.3 L249.9 514.1 L253.9 511.3 L258.2 508.9 L262.8 507 L267.5 505.6 L272.3 504.7 L277.2 504.2 L282.1 504.3 L287 504.8 L291.8 505.9 L296.4 507.5 L300.8 509.5 L305 511.9 L308.9 514.8 L312.5 518.1 L315.7 521.7 L318.5 525.7 L320.9 529.9 L322.8 534.3 L324.2 538.9 M315.5 539.6 L316.2 543.2 L316.5 546.9 L316.5 550.6 L316 554.3 L315.1 557.9 L313.9 561.4 L312.3 564.7 L310.3 567.9 L308 570.9 L305.5 573.6 L302.6 576 L299.5 578.2 L296.2 580 L292.7 581.4 L289.1 582.5 L285.4 583.3 L281.7 583.6 L277.9 583.5 L274.2 583.1 L270.5 582.3 L267 581.1 L263.6 579.6 L260.4 577.7 L257.4 575.5 L254.6 573 L252.2 570.2 L250 567.2 L248.2 563.9 L246.8 560.5 L245.7 557 L245 553.4 L244.7 549.7 L244.7 546 L245.2 542.3 L246.1 538.7 L247.3 535.2 L248.9 531.9 L250.9 528.7 L253.2 525.7 L255.7 523 L258.6 520.6 L261.7 518.4 L265 516.6 L268.5 515.2 L272.1 514.1 L275.8 513.3 L279.5 513 L283.3 513.1 L287 513.5 L290.7 514.3 L294.2 515.5 L297.6 517 L300.8 518.9 L303.8 521.1 L306.6 523.6 L309 526.4 L311.2 529.4 L313 532.7 L314.4 536.1 L315.5 539.6 M306.8 543 L307.3 545.6 L307.6 548.3 L307.5 551 L307.2 553.6 L306.5 556.2 L305.6 558.7 L304.5 561.2 L303.1 563.5 L301.4 565.6 L299.6 567.6 L297.5 569.3 L295.3 570.9 L292.9 572.2 L290.4 573.2 L287.8 574 L285.1 574.5 L282.4 574.8 L279.7 574.8 L277 574.4 L274.3 573.9 L271.8 573 L269.3 571.9 L267 570.5 L264.8 568.9 L262.8 567.1 L261.1 565.1 L259.5 562.9 L258.2 560.6 L257.2 558.1 L256.4 555.6 L255.9 553 L255.6 550.3 L255.7 547.6 L256 545 L256.7 542.4 L257.6 539.9 L258.7 537.4 L260.1 535.1 L261.8 533 L263.6 531 L265.7 529.3 L267.9 527.7 L270.3 526.4 L272.8 525.4 L275.4 524.6 L278.1 524.1 L280.8 523.8 L283.5 523.8 L286.2 524.2 L288.9 524.7 L291.4 525.6 L293.9 526.7 L296.2 528.1 L298.4 529.7 L300.4 531.5 L302.1 533.5 L303.7 535.7 L305 538 L306 540.5 L306.8 543 M358.5 596.7 L232.2 628.2 L200.7 501.9 L327 470.4 Z M301.9 638.6 L190.3 571.6 L257.3 460 L368.9 527 Z M339.6 585.4 L243.5 609.3 L219.6 513.2 L315.7 489.3 Z M347.5 532.4 L296.5 617.2 L211.7 566.2 L262.7 481.4 Z M322.5 575.1 L253.8 592.2 L236.7 523.5 L305.4 506.4 Z M187.3 547.3 L363.9 503.3 M188 550.2 L364.6 506.2 M188.7 553.1 L365.3 509.1 M190.2 558.9 L366.8 514.9 M191.6 564.8 L368.2 520.7 M195 578.3 L371.6 534.3 M196.5 584.2 L373.1 540.1 M197.9 590 L374.5 546 M198.7 592.9 L375.2 548.9 M199.4 595.8 L376 551.8 M187.3 547.3 L199.4 595.8 M191.2 546.3 L203.3 594.8 M218.3 539.6 L230.4 588.1 M222.2 538.6 L234.3 587.1 M247.4 532.3 L259.5 580.8 M305.7 517.8 L317.8 566.3 M330.9 511.5 L343 560 M334.8 510.5 L346.9 559 M360 504.2 L372.1 552.8 M363.9 503.3 L376 551.8 M240.2 561.5 L240.4 565.3 L240.1 568.9 L239.3 572.3 L238.1 575.3 L236.6 577.8 L234.7 579.8 L232.6 581.1 L230.3 581.7 L227.9 581.6 L225.6 580.7 L223.3 579.2 L221.3 577 L219.5 574.3 L218 571.2 L217 567.7 L216.4 564.1 L216.2 560.3 L216.5 556.7 L217.3 553.3 L218.5 550.3 L220 547.8 L221.9 545.8 L224 544.5 L226.3 543.9 L228.7 544 L231 544.9 L233.3 546.4 L235.3 548.6 L237.1 551.3 L238.6 554.4 L239.6 557.9 L240.2 561.5 M232.3 562.4 L232.4 564.7 L232.2 566.9 L231.8 568.8 L231.1 570.3 L230.2 571.3 L229.2 571.8 L228.2 571.6 L227.1 570.8 L226.2 569.4 L225.3 567.6 L224.7 565.5 L224.3 563.2 L224.2 560.9 L224.4 558.7 L224.8 556.8 L225.5 555.3 L226.4 554.3 L227.4 553.8 L228.4 554 L229.5 554.8 L230.4 556.2 L231.3 558 L231.9 560.1 L232.3 562.4 M348.8 534.5 L349 538.3 L348.7 541.9 L347.9 545.3 L346.7 548.3 L345.2 550.8 L343.3 552.8 L341.2 554.1 L338.9 554.7 L336.5 554.6 L334.2 553.7 L331.9 552.2 L329.9 550 L328.1 547.3 L326.6 544.2 L325.6 540.7 L325 537.1 L324.8 533.3 L325.1 529.7 L325.9 526.3 L327.1 523.3 L328.6 520.8 L330.5 518.8 L332.6 517.5 L334.9 516.9 L337.3 517 L339.6 517.9 L341.9 519.4 L343.9 521.6 L345.7 524.3 L347.2 527.4 L348.2 530.9 L348.8 534.5 M340.9 535.4 L341 537.7 L340.8 539.9 L340.4 541.8 L339.7 543.3 L338.8 544.3 L337.8 544.8 L336.8 544.6 L335.7 543.8 L334.8 542.4 L333.9 540.6 L333.3 538.5 L332.9 536.2 L332.8 533.9 L333 531.7 L333.4 529.8 L334.1 528.3 L335 527.3 L336 526.8 L337 527 L338.1 527.8 L339 529.2 L339.9 531 L340.5 533.1 L340.9 535.4 M284 550 L283.9 550.8 L283.7 551.5 L283.3 552.2 L282.8 552.8 L282.2 553.3 L281.5 553.7 L280.8 553.9 L280 554 L279.2 553.9 L278.5 553.7 L277.8 553.3 L277.2 552.8 L276.7 552.2 L276.3 551.5 L276.1 550.8 L276 550 L276.1 549.2 L276.3 548.5 L276.7 547.8 L277.2 547.2 L277.8 546.7 L278.5 546.3 L279.2 546.1 L280 546 L280.8 546.1 L281.5 546.3 L282.2 546.7 L282.8 547.2 L283.3 547.8 L283.7 548.5 L283.9 549.2 L284 550 M292 550 L291.8 552.3 L291.1 554.6 L290 556.7 L288.5 558.5 L286.7 560 L284.6 561.1 L282.3 561.8 L280 562 L277.7 561.8 L275.4 561.1 L273.3 560 L271.5 558.5 L270 556.7 L268.9 554.6 L268.2 552.3 L268 550 L268.2 547.7 L268.9 545.4 L270 543.3 L271.5 541.5 L273.3 540 L275.4 538.9 L277.7 538.2 L280 538 L282.3 538.2 L284.6 538.9 L286.7 540 L288.5 541.5 L290 543.3 L291.1 545.4 L291.8 547.7 L292 550 M296 550 L295.7 553.1 L294.8 556.1 L293.3 558.9 L291.3 561.3 L288.9 563.3 L286.1 564.8 L283.1 565.7 L280 566 L276.9 565.7 L273.9 564.8 L271.1 563.3 L268.7 561.3 L266.7 558.9 L265.2 556.1 L264.3 553.1 L264 550 L264.3 546.9 L265.2 543.9 L266.7 541.1 L268.7 538.7 L271.1 536.7 L273.9 535.2 L276.9 534.3 L280 534 L283.1 534.3 L286.1 535.2 L288.9 536.7 L291.3 538.7 L293.3 541.1 L294.8 543.9 L295.7 546.9 L296 550 M307 550 L306.5 555.3 L304.9 560.3 L302.4 565 L299.1 569.1 L295 572.4 L290.3 574.9 L285.3 576.5 L280 577 L274.7 576.5 L269.7 574.9 L265 572.4 L260.9 569.1 L257.6 565 L255.1 560.3 L253.5 555.3 L253 550 L253.5 544.7 L255.1 539.7 L257.6 535 L260.9 530.9 L265 527.6 L269.7 525.1 L274.7 523.5 L280 523 L285.3 523.5 L290.3 525.1 L295 527.6 L299.1 530.9 L302.4 535 L304.9 539.7 L306.5 544.7 L307 550 M292 550 L303 550 M290.4 556 L299.9 561 M286 560.4 L291.5 569.1 M280 562 L280 572 M274 560.4 L268.5 569.1 M269.6 556 L260.1 561 M268 550 L257 550 M269.6 544 L260.1 539 M274 539.6 L268.5 530.9 M280 538 L280 528 M286 539.6 L291.5 530.9 M290.4 544 L299.9 539 M315.6 540.6 L315.7 543.2 L315 545.9 L313.3 548.5 L310.9 550.7 L307.9 552.5 L304.4 553.7 L300.8 554.2 L297.3 554.1 L294.1 553.3 L291.4 551.8 L289.5 549.8 L288.4 547.4 L288.3 544.8 L289 542.1 L290.7 539.5 L293.1 537.3 L296.1 535.5 L299.6 534.3 L303.2 533.8 L306.7 533.9 L309.9 534.7 L312.6 536.2 L314.5 538.2 L315.6 540.6 M269.6 552.6 L269.7 555.2 L269 557.9 L267.3 560.5 L264.9 562.7 L261.9 564.5 L258.4 565.7 L254.8 566.2 L251.3 566.1 L248.1 565.3 L245.4 563.8 L243.5 561.8 L242.4 559.4 L242.3 556.8 L243 554.1 L244.7 551.5 L247.1 549.3 L250.1 547.5 L253.6 546.3 L257.2 545.8 L260.7 545.9 L263.9 546.7 L266.6 548.2 L268.5 550.2 L269.6 552.6 M232 501.1 L235.7 505.8 M234.4 499.3 L238.1 504 M236.7 497.4 L240.4 502.1 M239.1 495.6 L242.8 500.3 M308.2 488.3 L305 493.4 M310.7 489.9 L307.6 495 M313.3 491.5 L310.1 496.6 M315.8 493.1 L312.7 498.2 M337.5 564.1 L342.8 566.9 M338.9 561.5 L344.2 564.3 M340.3 558.8 L345.6 561.6 M341.7 556.2 L347 559 M281.5 609.5 L280.6 615.4 M284.4 609.9 L283.6 615.8 M287.4 610.3 L286.6 616.2 M290.4 610.7 L289.5 616.7 M254.1 430.3 L254.1 452.3 L282.1 452.3 L282.1 428.3 M395.4 586.7 L376.4 575.7 L362.4 600 L383.1 612 M188.6 630.1 L207.7 619.3 L193.9 594.9 L173.1 606.7 M358 490 L377 479 M367 581.1 L195.3 588.6 M318.9 633.6 L192.2 517.5 M247.8 636.7 L240.3 465 M195.3 588.6 L311.4 461.9 M192.2 517.5 L363.9 510 M240.3 465 L367 581.1 M311.4 461.9 L318.9 633.6 M363.9 510 L247.8 636.7 " stroke-width="1"/><path d="M191.4 555.5 L364.1 512.5 M199.1 586.6 L371.9 543.5 M236.3 562 L236.4 564.9 L236.3 567.7 L235.8 570.4 L235 572.8 L234 574.7 L232.8 576.3 L231.4 577.3 L229.9 577.7 L228.3 577.6 L226.7 576.9 L225.2 575.7 L223.8 573.9 L222.6 571.8 L221.5 569.3 L220.8 566.5 L220.3 563.6 L220.2 560.7 L220.3 557.9 L220.8 555.2 L221.6 552.8 L222.6 550.9 L223.8 549.3 L225.2 548.3 L226.7 547.9 L228.3 548 L229.9 548.7 L231.4 549.9 L232.8 551.7 L234 553.8 L235.1 556.3 L235.8 559.1 L236.3 562 M344.9 535 L345 537.9 L344.9 540.7 L344.4 543.4 L343.6 545.8 L342.6 547.7 L341.4 549.3 L340 550.3 L338.5 550.7 L336.9 550.6 L335.3 549.9 L333.8 548.7 L332.4 546.9 L331.2 544.8 L330.1 542.3 L329.4 539.5 L328.9 536.6 L328.8 533.7 L328.9 530.9 L329.4 528.2 L330.2 525.8 L331.2 523.9 L332.4 522.3 L333.8 521.3 L335.3 520.9 L336.9 521 L338.5 521.7 L340 522.9 L341.4 524.7 L342.6 526.8 L343.7 529.3 L344.4 532.1 L344.9 535 M288 550 L287.8 551.6 L287.4 553.1 L286.7 554.4 L285.7 555.7 L284.4 556.7 L283.1 557.4 L281.6 557.8 L280 558 L278.4 557.8 L276.9 557.4 L275.6 556.7 L274.3 555.7 L273.3 554.4 L272.6 553.1 L272.2 551.6 L272 550 L272.2 548.4 L272.6 546.9 L273.3 545.6 L274.3 544.3 L275.6 543.3 L276.9 542.6 L278.4 542.2 L280 542 L281.6 542.2 L283.1 542.6 L284.4 543.3 L285.7 544.3 L286.7 545.6 L287.4 546.9 L287.8 548.4 L288 550 M299.4 545.2 L299.9 548.9 L299.7 552.6 L298.7 556.2 L297 559.6 L294.6 562.6 L291.7 565.2 L288.3 567.1 L284.6 568.4 L280.7 569 L276.8 568.9 L273 568 L269.5 566.5 L266.4 564.3 L263.8 561.5 L261.9 558.3 L260.6 554.8 L260.1 551.1 L260.3 547.4 L261.3 543.8 L263 540.4 L265.4 537.4 L268.3 534.8 L271.7 532.9 L275.4 531.6 L279.3 531 L283.2 531.1 L287 532 L290.5 533.5 L293.6 535.7 L296.2 538.5 L298.1 541.7 L299.4 545.2 M302.8 544.3 L303.4 548.1 L303.2 552 L302.4 555.7 L300.9 559.4 L298.7 562.7 L296 565.6 L292.8 568.1 L289.2 570 L285.3 571.3 L281.3 572 L277.2 572 L273.2 571.3 L269.4 570 L266 568.1 L262.9 565.6 L260.4 562.6 L258.5 559.3 L257.2 555.7 L256.6 551.9 L256.8 548 L257.6 544.3 L259.1 540.6 L261.3 537.3 L264 534.4 L267.2 531.9 L270.8 530 L274.7 528.7 L278.7 528 L282.8 528 L286.8 528.7 L290.6 530 L294 531.9 L297.1 534.4 L299.6 537.4 L301.5 540.7 L302.8 544.3 " stroke-width="2"/><path d="M378.1 549.3 L377.7 557.9 L376.6 566.4 L374.7 574.8 L372.2 583 L368.9 590.9 L364.9 598.5 L360.3 605.8 L355.1 612.6 L349.3 619 L342.9 624.8 L336.1 630 L328.9 634.6 L321.2 638.6 L313.3 641.9 L305.1 644.4 L296.7 646.3 L288.2 647.4 L279.6 647.8 L271 647.4 L262.5 646.3 L254.1 644.4 L245.9 641.9 L238 638.6 L230.4 634.6 L223.1 630 L216.3 624.8 L209.9 619 L204.1 612.6 L198.9 605.8 L194.3 598.5 L190.3 590.9 L187 583 L184.5 574.8 L182.6 566.4 L181.5 557.9 L181.1 549.3 L181.5 540.7 L182.6 532.2 L184.5 523.8 L187 515.6 L190.3 507.7 L194.3 500 L198.9 492.8 L204.1 486 L209.9 479.6 L216.3 473.8 L223.1 468.6 L230.3 464 L238 460 L245.9 456.7 L254.1 454.2 L262.5 452.3 L271 451.2 L279.6 450.8 L288.2 451.2 L296.7 452.3 L305.1 454.2 L313.3 456.7 L321.2 460 L328.9 464 L336.1 468.6 L342.9 473.8 L349.3 479.6 L355.1 486 L360.3 492.8 L364.9 500 L368.9 507.7 L372.2 515.6 L374.7 523.8 L376.6 532.2 L377.7 540.7 L378.1 549.3 " stroke-width="3"/><path d="M255.6 437.3 L281.6 437.3 M255.6 439.3 L281.6 439.3 M255.6 441.3 L281.6 441.3 M255.6 443.3 L281.6 443.3 M255.6 445.3 L281.6 445.3 M255.6 447.3 L281.6 447.3 M255.6 449.3 L281.6 449.3 M255.6 451.3 L281.6 451.3 M255.6 438.3 L271.6 438.3 M275.6 438.3 L281.6 438.3 M255.6 442.3 L271.6 442.3 M275.6 442.3 L281.6 442.3 M255.6 444.3 L271.6 444.3 M275.6 444.3 L281.6 444.3 M255.6 448.3 L271.6 448.3 M275.6 448.3 L281.6 448.3 M255.6 450.3 L271.6 450.3 M275.6 450.3 L281.6 450.3 M261.6 437.3 L261.6 450.3 M267.6 437.3 L267.6 450.3 M273.6 437.3 L273.6 450.3 M388.6 584.5 L375.6 607 M386.9 583.5 L373.9 606 M385.1 582.5 L372.1 605 M383.4 581.5 L370.4 604 M381.7 580.5 L368.7 603 M379.9 579.5 L366.9 602 M378.2 578.5 L365.2 601 M376.5 577.5 L363.5 600 M387.7 584 L379.7 597.9 M377.7 601.3 L374.7 606.5 M384.3 582 L376.3 595.9 M374.3 599.3 L371.3 604.5 M382.5 581 L374.5 594.9 M372.5 598.3 L369.5 603.5 M379.1 579 L371.1 592.9 M369.1 596.3 L366.1 601.5 M377.3 578 L369.3 591.9 M367.3 595.3 L364.3 600.5 M385.6 589.7 L374.3 583.2 M382.6 594.9 L371.3 588.4 M379.6 600.1 L368.3 593.6 M193.9 625.3 L181.1 602.7 M195.7 624.4 L182.9 601.7 M197.4 623.4 L184.6 600.7 M199.2 622.4 L186.4 599.8 M200.9 621.4 L188.1 598.8 M202.6 620.4 L189.8 597.8 M204.4 619.4 L191.6 596.8 M206.1 618.4 L193.3 595.8 M194.8 624.8 L186.9 610.9 M185 607.4 L182 602.2 M198.3 622.9 L190.4 609 M188.4 605.5 L185.5 600.2 M200 621.9 L192.2 608 M190.2 604.5 L187.2 599.3 M203.5 619.9 L195.6 606 M193.7 602.5 L190.7 597.3 M205.3 618.9 L197.4 605 M195.4 601.5 L192.4 596.3 M191 620.1 L202.3 613.7 M188 614.9 L199.3 608.5 M185.1 609.7 L196.4 603.3 " stroke-width="1"/><path d="M229.6 502.9 L240.7 494.3 L244.4 499.1 L233.3 507.7 Z M305.7 486.7 L317.5 494.2 L314.3 499.3 L302.5 491.8 Z M336.1 566.8 L342.6 554.4 L347.9 557.2 L341.4 569.6 Z M278.5 609.1 L292.3 611 L291.5 616.9 L277.7 615 Z " stroke-width="2"/></g><g shape-rendering="crispEdges"><path d="M280 549 V536" stroke="#00c000" stroke-width="2"/><path d="M277 538 L280 529 L283 538 Z" fill="#20d020"/><path d="M281 550.500 H294" stroke="#d00000" stroke-width="2"/><path d="M293 547.500 L301 550.500 L293 553.500 Z" fill="#b02020"/><ellipse cx="279.500" cy="551" rx="2.800" ry="3" fill="#1a6fc8"/><path d="M281 524 l1.500 2 l1.500 -2 M282.500 526 v2.500" stroke="#00c000" stroke-width="1" fill="none"/><path d="M281 543.500 h3 l-3 3.500 h3" stroke="#2a8cf0" stroke-width="1" fill="none"/><path d="M299.500 543 l4 4 M303.500 543 l-4 4" stroke="#e00000" stroke-width="1" fill="none"/></g></svg><svg style="left:0px;top:0px;" width="1024" height="768"><g shape-rendering="crispEdges" fill="none" stroke="#000"><path d="M767.4 245.5 L766.6 251.8 L764.2 257.9 L760.3 263.8 L755 269.1 L748.4 273.9 L740.7 278 L732.1 281.3 L722.7 283.7 L712.8 285.2 L702.7 285.7 L692.6 285.2 L682.7 283.7 L673.3 281.3 L664.7 278 L657 273.9 L650.4 269.1 L645.1 263.8 L641.2 257.9 L638.8 251.8 L638 245.5 L638.8 239.2 L641.2 233.1 L645.1 227.2 L650.4 221.9 L657 217.1 L664.7 213 L673.3 209.7 L682.7 207.3 L692.6 205.8 L702.7 205.3 L712.8 205.8 L722.7 207.3 L732.1 209.7 L740.7 213 L748.4 217.1 L755 221.9 L760.3 227.2 L764.2 233.1 L766.6 239.2 L767.4 245.5 M754.1 245.7 L753.3 250.2 L751 254.6 L747.3 258.7 L742.2 262.4 L736 265.6 L728.7 268.2 L720.7 270.1 L712.1 271.3 L703.3 271.7 L694.5 271.3 L685.9 270.1 L677.9 268.2 L670.6 265.6 L664.4 262.4 L659.3 258.7 L655.6 254.6 L653.3 250.2 L652.5 245.7 L653.3 241.2 L655.6 236.8 L659.3 232.7 L664.4 229 L670.6 225.8 L677.9 223.2 L685.9 221.3 L694.5 220.1 L703.3 219.7 L712.1 220.1 L720.7 221.3 L728.7 223.2 L736 225.8 L742.2 229 L747.3 232.7 L751 236.8 L753.3 241.2 L754.1 245.7 M711.3 240 L710.9 241.4 L709.8 242.6 L708 243.6 L705.8 244.3 L703.3 244.5 L700.8 244.3 L698.6 243.6 L696.8 242.6 L695.7 241.4 L695.3 240 L695.7 238.6 L696.8 237.4 L698.6 236.4 L700.8 235.7 L703.3 235.5 L705.8 235.7 L708 236.4 L709.8 237.4 L710.9 238.6 L711.3 240 M715.8 242 L715.4 243.9 L714.1 245.8 L712.1 247.3 L709.5 248.5 L706.5 249.2 L703.3 249.5 L700.1 249.2 L697 248.5 L694.5 247.3 L692.5 245.8 L691.2 243.9 L690.8 242 M708.8 241 L708.4 242.1 L707.2 243.1 L705.4 243.8 L703.3 244 L701.2 243.8 L699.4 243.1 L698.2 242.1 L697.8 241 L698.2 239.9 L699.4 238.9 L701.2 238.2 L703.3 238 L705.4 238.2 L707.2 238.9 L708.4 239.9 L708.8 241 M690.8 240 L690.8 252 M715.8 240 L715.8 252 M715.8 252 L715.4 253.9 L714.1 255.8 L712.1 257.3 L709.5 258.5 L706.5 259.2 L703.3 259.5 L700.1 259.2 L697 258.5 L694.5 257.3 L692.5 255.8 L691.2 253.9 L690.8 252 M691.4 238.5 L656.4 230.5 M692 236 L657 228 M692.6 233.5 L657.6 225.5 M709.4 231 L728.4 216 M711 233 L730 218 M712.6 235 L731.6 220 M695.9 250.8 L678.9 268.8 M694 249 L677 267 M692.1 247.2 L675.1 265.2 M714.8 243.5 L747.8 253.5 M714 246 L747 256 M713.2 248.5 L746.2 258.5 M659 224 L669 216 M652 240 L657 229 M710 213 L723 216 M735 220 L745 223 M711.5 258 L711.5 272 M711.5 286 L711.5 387 M711.4 387 L711.1 387.9 L710.3 388.8 L709 389.5 L707.3 390 L705.3 390.4 L703.2 390.5 L701.1 390.4 L699.1 390 L697.4 389.5 L696.1 388.8 L695.3 387.9 L695 387 M738.5 279 L738.5 316 M685 417 L767 335 L767 397 M685 434 L767 353.5 M682.5 415 L764.5 335 M764.5 335 L767 335 M685 417 L685 467.5 M638 421 L638 402 L694 346 M641 404 L694 351 M643 412 L694 361 M646 418 L685 379 M638 402 L641 404 L643 414 L647 419 M638 421 L683 433 L685 417 M641 417 L681 428 M678 417 L681 428 M638 421 L638 455 M661.5 428 L661.5 464 M634 428 L634 452 M757 364 L757 392 M760 361 L760 395 M754 370 L754 386 M611 412 L613 425 L622 438 L640 450 L662 460 L702 466 L736 461 L762 452 L785 433 L793 421 M613 428 L634 412 L634 452 M618 436 L634 424 M622 440 L638 428 M626 430 L630 446 M712 407 L722 410 L733 418 L742 428 L748 438 L752 448 L754 458 M740 381 L752 386 L763 395 L771 405 L777 415 L781 424 L784 432 M726 442 L732 452 L736 462 M698 424 L685 434 M711.5 387 L711.5 424 M726 455 L740 458 L752 462 M752 462 L770 447 L786 436 M760 458 L778 444 M688 446 L697 438 M688 460 L697 468 M789 395 L789 396.5 M789 400 L789 401.5 M789 405 L789 406.5 M789 410 L789 411.5 M789 415 L789 416.5 M789 420 L789 421.5 M778 400 L779.5 402 M778 406 L779.5 408 M778 412 L779.5 414 M778 418 L779.5 420 M778 424 L779.5 426 M778 430 L779.5 432 M778 436 L779.5 438 M778 442 L779.5 444 M797.4 422 L797.4 508 M607.6 510 L611 517 L616.9 522.8 L627 531 L638.8 540 L655 546 L673 551 L690 553 L707.5 554 L727 552 M727 552 L729.5 551.4 M731.5 551 L734 550.4 M736 549.9 L738.5 549.3 M740.5 548.8 L743 548.3 M745 547.8 L747.1 547 M748.8 546.3 L750.8 545.6 M752.5 544.9 L754.6 544.1 M756.2 543.5 L758.3 542.7 M760 542 L761.8 541.1 M763.2 540.3 L765 539.4 M766.5 538.6 L768.3 537.7 M769.8 537 L771.5 536.1 M773 535.3 L774.4 534.2 M775.5 533.2 L776.9 532.1 M778 531.1 L779.4 530 M780.5 529.1 L781.9 527.9 M783 527 L784.2 525.8 M785.2 524.8 L786.4 523.5 M787.5 522.5 L788.7 521.3 M789.7 520.2 L790.9 519 M791.9 518 L792.7 516.6 M793.3 515.5 L794.1 514.1 M794.7 513 L795.5 511.6 M796.1 510.5 L796.9 509.1 M704.4 586.3 L725 585 L745 582 L765 576 L782.5 568 L796 558 L807.5 546 L814 535 L818.4 524.4 L819.4 499.4 L813.8 480.6 L802.8 466.6 L798 462 M589.7 481.3 L586.7 500 L589.1 521.9 L601.6 543.8 L615.3 555.5 L632.7 565.5 L652.2 573.5 L673.1 579.7 L690 582.5 L704.4 583.8 L724.9 582.5 L744.9 579.5 L764.8 573.5 L782.3 565.5 L795.7 555.5 L807.2 543.5 L813.7 532.5 L818.1 521.9 L819.1 496.9 L813.5 478.1 M588.1 495.5 L590.5 517 L602.8 538.6 L616.3 550.1 L633.6 560 L652.8 567.9 L673.5 574 L690.2 576.7 L704.4 578 L724.7 576.7 L744.4 573.8 L764.1 567.9 L781.3 560 L794.6 550.1 L805.9 538.3 L812.3 527.5 L816.7 517 L817.7 492.4 M589.2 491.4 L591.7 512.4 L603.8 533.4 L617.2 544.7 L634.3 554.3 L653.3 562 L673.8 567.9 L690.3 570.6 L704.4 571.8 L724.5 570.6 L744 567.7 L763.5 562 L780.5 554.3 L793.7 544.7 L804.9 533.2 L811.2 522.6 L815.5 512.4 L816.5 488.4 M592 510.7 L604.1 531.5 L617.5 542.6 L634.5 552.1 L653.4 559.7 L673.8 565.6 L690.4 568.2 L704.4 569.5 L724.4 568.2 L743.8 565.4 L763.3 559.7 L780.3 552.1 L793.4 542.6 L804.6 531.2 L810.9 520.8 L815.2 510.7 M586.5 505 L586.5 608 M589.5 528 L589.5 610 M604.5 550 L604.5 613 M610 556 L610 615 M620.5 562 L620.5 606 M586.5 608 L609 615 L620.5 606 M598 545 L598 612 M714 599 L714 662 M728 604 L728 668 M732.5 604 L732.5 670 M711.5 660 L732.5 670 L745 659 M694 590 L711 597 L732 604 L738 600 L747 592 M700 590 L714 596 L732 602 M736 603 L745 595 M783.5 570 L783.5 604 M786.5 568 L786.5 606 M800 558 L800 612 M806 552 L806 611 M817 540 L817 604 M820 525 L820 602 M783.5 604 L801.3 612.5 L820 602.5 M674 528 L701 528 M677 553 H698 V563 H677 Z M684 553 L684 563 M691 553 L691 563 M672 560 L672 566 M672 566 L700 569 M688.5 477 L688.5 524 M798.5 452 L798.5 487 M803 462 L810 470 L815 480 L815 487 L800 487 M802 478 H810 V486 H802 Z M804 480 L808 484 " stroke-width="1"/><path d="M715.8 240 L715.4 241.9 L714.1 243.8 L712.1 245.3 L709.5 246.5 L706.5 247.2 L703.3 247.5 L700.1 247.2 L697 246.5 L694.5 245.3 L692.5 243.8 L691.2 241.9 L690.8 240 L691.2 238.1 L692.5 236.2 L694.5 234.7 L697 233.5 L700.1 232.8 L703.3 232.5 L706.5 232.8 L709.5 233.5 L712.1 234.7 L714.1 236.2 L715.4 238.1 L715.8 240 M692 233.5 L658 225.5 M697 250 L680 268 M714 243.5 L748 253.5 M733 219 L735 226 L744 231 L751 240 L754 248 M695 258 L695 273 M695 286 L695 387 M721.5 281 L721.5 316 M685 417 L767 335 M607.6 408 L611 398 L618 390 L634.5 375 L650 369 L663 366 M768 376 L780 384 L789 392.6 L795 400 L797.4 408 L797.4 422 M698 424 L710 428 L720 435 L726 442 M607.6 408 L607.6 510 M606 462 L597 472 L589.4 483.8 L586.3 502.5 L588.8 524.4 L601.3 546.3 L615 558 L632.5 568 L652 576 L673 582.2 L690 585 L704.4 586.3 M586.5 530 L586.5 608 M711.5 598 L711.5 660 M732 588 L732 604 M674 525 H701 V566 H674 Z M798.5 452 L801 458 L801 486 " stroke-width="2"/><path d="M607.6 408 L608.7 426.6 L618 440.6 L636.9 453.5 L660.3 464 L680 468 L702.5 470 L720 468.5 L735.3 465.2 L763.4 455.9 L789 434.8 L797.4 422 " stroke-width="3" stroke-linejoin="round"/><path d="M718.5 315 V360 A11.25 4.5 0 0 0 741 360 V315 A11.25 4.5 0 0 1 718.5 315 Z" fill="#000" stroke="#000" stroke-width="1"/><path d="M723.9 318.5 h2.8 M730.4 318.5 h4.8 M722.5 320.5 h3.4 M729.9 320.5 h4.8 M722.4 322.5 h2.9 M729.1 322.5 h4.3 M724.5 323.5 h5.5 M732.0 323.5 h2.2 M724.4 325.5 h7.5 M725.0 327.5 h2.6 M729.0 327.5 h3.3 M723.2 329.5 h7.0 M725.1 331.5 h6.1 M724.3 332.5 h4.0 M730.9 332.5 h5.4 M722.6 334.5 h2.4 M728.6 334.5 h7.9 M725.1 335.5 h2.1 M729.5 335.5 h4.5 M724.4 336.5 h4.0 M722.7 338.5 h2.5 M725.4 340.5 h3.7 M730.9 340.5 h6.1 M725.3 342.5 h7.4 M724.0 344.5 h7.6 M725.2 346.5 h4.6 M731.6 346.5 h3.8 M721.6 347.5 h5.7 M730.2 347.5 h2.4 M723.9 349.5 h3.7 M730.1 349.5 h5.5 M722.5 351.5 h4.7 M730.0 351.5 h3.9 M724.9 353.5 h3.6 M731.8 353.5 h2.6 M722.7 354.5 h3.3 M729.5 354.5 h3.4 M721.9 356.5 h3.9 M724.7 357.5 h7.8 M722.6 359.5 h6.7 M725.0 361.5 h4.0 M732.5 361.5 h2.5 " stroke="#c0c0c0" stroke-width="1" fill="none"/><path d="M667.5 327 V371 H683.5 V327 Z" fill="#c0c0c0" stroke="none"/><path d="M663.5 370 V414 A11.75 4.5 0 0 0 687 414 V370 A11.75 4.5 0 0 1 663.5 370 Z" fill="#000" stroke="#000" stroke-width="1"/><path d="M670.3 373.5 h4.4 M675.8 373.5 h6.9 M666.6 375.5 h4.6 M672.5 375.5 h2.5 M670.3 376.5 h5.8 M666.7 378.5 h3.3 M672.7 378.5 h2.8 M677.8 378.5 h5.2 M666.9 380.5 h5.4 M673.9 380.5 h2.6 M668.5 382.5 h5.2 M677.0 382.5 h4.8 M669.7 384.5 h6.2 M677.6 384.5 h5.4 M667.7 385.5 h7.9 M676.9 385.5 h4.5 M670.3 387.5 h2.5 M667.9 388.5 h4.1 M674.5 388.5 h6.8 M668.4 390.5 h6.0 M675.6 390.5 h6.2 M667.6 391.5 h4.3 M675.0 391.5 h2.1 M679.5 391.5 h3.0 M667.0 393.5 h3.5 M672.7 393.5 h7.2 M670.0 395.5 h6.9 M669.2 397.5 h4.3 M675.2 397.5 h2.5 M668.4 399.5 h5.5 M668.6 401.5 h5.7 M676.3 401.5 h2.8 M668.3 403.5 h7.2 M668.1 405.5 h4.4 M674.9 405.5 h4.4 M667.9 407.5 h2.3 M670.3 409.5 h5.7 M667.1 411.5 h3.5 M672.6 411.5 h4.2 M668.4 412.5 h3.9 M673.7 412.5 h6.5 M667.3 414.5 h7.7 M669.5 416.5 h3.8 " stroke="#c0c0c0" stroke-width="1" fill="none"/><path d="M683.7 326.5 L683.3 327.9 L682.1 329.1 L680.3 330.1 L678 330.8 L675.5 331 L673 330.8 L670.7 330.1 L668.9 329.1 L667.7 327.9 L667.3 326.5 L667.7 325.1 L668.9 323.9 L670.7 322.9 L673 322.2 L675.5 322 L678 322.2 L680.3 322.9 L682.1 323.9 L683.3 325.1 L683.7 326.5 M667.5 327 L667.5 371 M683.5 327 L683.5 371 " stroke-width="1"/></g><ellipse cx="681" cy="535" rx="2.5" ry="2" fill="#000"/><ellipse cx="694.5" cy="535" rx="2.5" ry="2" fill="#000"/><g shape-rendering="crispEdges"><path d="M703.5 498 V478" stroke="#1e7fd6" stroke-width="3"/><path d="M699 480 L703.500 468 L708 480 Z" fill="#1e7fd6"/><path d="M703 499.500 L684 489" stroke="#00d000" stroke-width="2"/><path d="M678 486 L691 486.500 L686 494 Z" fill="#00a800"/><path d="M704 499.500 L722 490" stroke="#e00000" stroke-width="2"/><path d="M727 485.500 L715 487.500 L720 495 Z" fill="#b00000"/><path d="M706 461.500 h6 l-6 7 h6" stroke="#2a8cf0" stroke-width="1" fill="none"/><path d="M686.500 474 l3 4 l3 -4 M689.500 478 v4" stroke="#00c800" stroke-width="1" fill="none"/><path d="M727 474 l7 7 M734 474 l-7 7" stroke="#e00000" stroke-width="1" fill="none"/><path d="M851 581 L890 602" stroke="#008000" stroke-width="1"/><path d="M863 602 L902 581" stroke="#b00000" stroke-width="1"/><path d="M876.500 566 V611" stroke="#0000b0" stroke-width="1"/><rect x="873.500" y="591.500" width="6" height="5" fill="none" stroke="#008000" stroke-width="1"/></g></svg>
<div class="a" style="left:928px;top:128px;width:17px;height:561px;background:linear-gradient(90deg,#e4e4e4,#f0f0f0 30%,#f4f4f4 70%,#e9e9e9);"></div>
<div class="a" style="left:928px;top:689px;width:17px;height:1px;background:#a8a8a8;"></div>
<div class="a" style="left:929px;top:146px;width:15px;height:15px;box-sizing:border-box;border:1px solid #979797;border-radius:2px;background:linear-gradient(90deg,#f6f6f6,#e9e9ea 45%,#d3d3d6 55%,#dcdce0)"></div>
<svg style="left:928px;top:128px;" width="17" height="561"><path d="M5 11 L8.500 7 L12 11 Z" fill="#434343"/><path d="M5 550 L8.500 554 L12 550 Z" fill="#434343"/></svg>
<div class="a" style="left:54px;top:690px;width:574px;height:15px;background:#f0f0f0;"></div>
<div class="a" style="left:54px;top:704px;width:222px;height:1px;background:#a0a0a0;"></div>
<div class="a" style="left:54px;top:705px;width:874px;height:1px;background:#fff;"></div>
<div class="a" style="left:54px;top:690px;width:15px;height:14px;box-sizing:border-box;border:1px solid;border-color:#fff #a0a0a0 #a0a0a0 #fff;background:#f0f0f0"></div>
<div class="a" style="left:69px;top:690px;width:15px;height:14px;box-sizing:border-box;border:1px solid;border-color:#fff #a0a0a0 #a0a0a0 #fff;background:#f0f0f0"></div>
<div class="a" style="left:84px;top:690px;width:15px;height:14px;box-sizing:border-box;border:1px solid;border-color:#fff #a0a0a0 #a0a0a0 #fff;background:#f0f0f0"></div>
<div class="a" style="left:99px;top:690px;width:15px;height:14px;box-sizing:border-box;border:1px solid;border-color:#fff #a0a0a0 #a0a0a0 #fff;background:#f0f0f0"></div>
<svg style="left:54px;top:690px;" width="60" height="14"><path d="M4 3.500v7" stroke="#6a6a6a" stroke-width="1"/><path d="M10.500 3 v8 l-4 -4z" fill="#6a6a6a"/><path d="M25.500 3 v8 l-4 -4z" fill="#6a6a6a"/><path d="M34.5 3 v8 l4 -4z" fill="#6a6a6a"/><path d="M49.5 3 v8 l4 -4z" fill="#6a6a6a"/><path d="M55 3.500v7" stroke="#6a6a6a" stroke-width="1"/></svg>
<svg style="left:114px;top:690px;" width="170" height="15"><path d="M0 0 L52 0 L47 14.500 L5 14.500 Z" fill="#000"/><path d="M52 14 L56 1 M105 14 L109 1 M159 14 L163 1" stroke="#444" stroke-width="1" fill="none"/><path d="M52 14.500 H101 M105 14.500 H155" stroke="#888" stroke-width="1"/></svg>
<div class="t" style="left:126px;top:692px;font-size:12px;color:#fff;transform:scaleX(0.8565);transform-origin:0 0;">Model</div>
<div class="t" style="left:172px;top:692px;font-size:12px;color:#000;transform:scaleX(0.8662);transform-origin:0 0;">Layout1</div>
<div class="t" style="left:227px;top:692px;font-size:12px;color:#000;transform:scaleX(0.8896);transform-origin:0 0;">Layout2</div>
<div class="a" style="left:628px;top:690px;width:300px;height:14px;background:linear-gradient(#e6e6e6,#f2f2f2 40%,#ededed);"></div>
<div class="a" style="left:630px;top:691px;width:4px;height:13px;background:#fff;border:1px solid #a0a0a0;border-right:none;box-sizing:border-box;"></div>
<div class="a" style="left:789px;top:690px;width:15px;height:14px;box-sizing:border-box;border:1px solid #979797;border-radius:2px;background:linear-gradient(#f6f6f6,#e9e9ea 45%,#d3d3d6 55%,#dcdce0)"></div>
<svg style="left:628px;top:690px;" width="300" height="14"><path d="M17.500 3.500 v7 l-4 -3.500z" fill="#434343"/><path d="M289.5 3.500 v7 l4 -3.500z" fill="#434343"/></svg>
<div class="a" style="left:928px;top:690px;width:17px;height:15px;background:#f0f0f0;"></div>
<div class="a" style="left:0px;top:706px;width:1021px;height:5px;background:#fbfbfb;"></div>
<div class="a" style="left:0px;top:711px;width:1021px;height:1px;background:#a8a8a8;"></div>
<div class="a" style="left:0px;top:712px;width:1021px;height:1px;background:#686868;"></div>
<div class="a" style="left:7px;top:722px;width:1px;height:17px;background:#fff;"></div><div class="a" style="left:8px;top:722px;width:1px;height:17px;background:#a0a0a0;"></div><div class="a" style="left:10px;top:722px;width:1px;height:17px;background:#fff;"></div><div class="a" style="left:11px;top:722px;width:1px;height:17px;background:#a0a0a0;"></div>
<div class="a" style="left:16px;top:722px;width:983px;height:1px;background:#a8a8a8;"></div>
<div class="a" style="left:16px;top:723px;width:983px;height:20px;background:#fff;box-sizing:border-box;border-top:1px solid #686868;border-left:2px solid #696969;"></div>
<div class="a" style="left:999px;top:723px;width:1px;height:20px;background:#d0d0d0;"></div>
<div class="t" style="left:19px;top:728px;font-size:13px;color:#000;font-family:'Liberation Mono',monospace;transform:scaleX(0.9935);transform-origin:0 0;">Command:</div>
<div class="a" style="left:0px;top:743px;width:1021px;height:1px;background:#e2e2e2;"></div>
<div class="a" style="left:0px;top:744px;width:1021px;height:1px;background:#a0a0a0;"></div>
<div class="a" style="left:0px;top:745px;width:1021px;height:1px;background:#fff;"></div>
<div class="a" style="left:0px;top:746px;width:1021px;height:1px;background:#a0a0a0;"></div>
<div class="a" style="left:0px;top:747px;width:1021px;height:21px;background:#eeebeb;"></div>
<div class="a" style="left:5px;top:749px;width:165px;height:18px;box-sizing:border-box;border:1px solid;border-color:#9a9a9a #fff #fff #9a9a9a;background:#ece8e8"></div>
<div class="t" style="left:8px;top:752.6px;font-size:12px;color:#000;transform:scaleX(0.8132);transform-origin:0 0;">10.5647,</div>
<div class="t" style="left:58px;top:752.6px;font-size:12px;color:#000;transform:scaleX(0.8928);transform-origin:0 0;">-464.1373, 0.0000</div>
<div class="a" style="left:174px;top:750px;width:33px;height:17px;box-sizing:border-box;border:1px solid;border-color:#fff #9a9a9a #9a9a9a #fff;background:#eeebeb"></div>
<div class="t" style="left:176px;top:752.6px;font-size:12px;color:#000;transform:scaleX(0.8874);transform-origin:0 0;">SNAP</div>
<div class="a" style="left:211px;top:750px;width:31px;height:17px;box-sizing:border-box;border:1px solid;border-color:#fff #9a9a9a #9a9a9a #fff;background:#eeebeb"></div>
<div class="t" style="left:213px;top:752.6px;font-size:12px;color:#000;transform:scaleX(0.8998);transform-origin:0 0;">GRID</div>
<div class="a" style="left:246px;top:750px;width:43px;height:17px;box-sizing:border-box;border:1px solid;border-color:#fff #9a9a9a #9a9a9a #fff;background:#eeebeb"></div>
<div class="t" style="left:248px;top:752.6px;font-size:12px;color:#000;transform:scaleX(0.9043);transform-origin:0 0;">ORTHO</div>
<div class="a" style="left:293px;top:750px;width:40px;height:17px;box-sizing:border-box;border:1px solid;border-color:#fff #9a9a9a #9a9a9a #fff;background:#eeebeb"></div>
<div class="t" style="left:295px;top:752.6px;font-size:12px;color:#000;transform:scaleX(0.8848);transform-origin:0 0;">POLAR</div>
<div class="a" style="left:337px;top:749px;width:42px;height:19px;box-sizing:border-box;border:1px solid;border-color:#000 #fff #fff #000;background:#f7f5f5"></div>
<div class="t" style="left:340px;top:753.6px;font-size:12px;color:#000;transform:scaleX(0.8568);transform-origin:0 0;">OSNAP</div>
<div class="a" style="left:382px;top:750px;width:48px;height:17px;box-sizing:border-box;border:1px solid;border-color:#fff #9a9a9a #9a9a9a #fff;background:#eeebeb"></div>
<div class="t" style="left:384px;top:752.6px;font-size:12px;color:#000;transform:scaleX(0.8798);transform-origin:0 0;">OTRACK</div>
<div class="a" style="left:434px;top:750px;width:33px;height:17px;box-sizing:border-box;border:1px solid;border-color:#fff #9a9a9a #9a9a9a #fff;background:#eeebeb"></div>
<div class="t" style="left:436px;top:752.6px;font-size:12px;color:#000;transform:scaleX(0.8527);transform-origin:0 0;">DUCS</div>
<div class="a" style="left:472px;top:750px;width:27px;height:17px;box-sizing:border-box;border:1px solid;border-color:#fff #9a9a9a #9a9a9a #fff;background:#eeebeb"></div>
<div class="t" style="left:474px;top:752.6px;font-size:12px;color:#000;transform:scaleX(0.9077);transform-origin:0 0;">DYN</div>
<div class="a" style="left:503px;top:750px;width:28px;height:17px;box-sizing:border-box;border:1px solid;border-color:#fff #9a9a9a #9a9a9a #fff;background:#eeebeb"></div>
<div class="t" style="left:505px;top:752.6px;font-size:12px;color:#000;transform:scaleX(0.9818);transform-origin:0 0;">LWT</div>
<div class="a" style="left:535px;top:749px;width:47px;height:19px;box-sizing:border-box;border:1px solid;border-color:#000 #fff #fff #000;background:#f7f5f5"></div>
<div class="t" style="left:538px;top:753.6px;font-size:12px;color:#000;transform:scaleX(0.9606);transform-origin:0 0;">MODEL</div>
<div class="a" style="left:570px;top:747px;width:126px;height:19px;box-sizing:border-box;border:1px solid #767676;border-radius:3px;background:linear-gradient(#fff,#f3f4fa 50%,#e4e6f1);box-shadow:1px 1px 2px rgba(0,0,0,0.45)"></div>
<div class="t" style="left:576px;top:750.5px;font-size:12px;color:#575757;transform:scaleX(0.9708);transform-origin:0 0;">Model or Paper space</div>
<div class="t" style="left:784px;top:752.8px;font-size:12px;color:#000;transform:scaleX(0.8927);transform-origin:0 0;">Annotation Scale:</div>
<div class="t" style="left:877px;top:752.8px;font-size:12px;color:#000;transform:scaleX(0.8390);transform-origin:0 0;">1:1</div>
<div class="arr" style="left:895px;top:757px"></div>
<svg style="left:912px;top:750px;" width="18" height="16"><path d="M2 14.500 L7 5 L12 14.500 Z" fill="none" stroke="#2766b0" stroke-width="1.6"/><path d="M4.500 11.500 h5" stroke="#2766b0" stroke-width="1.300"/><path d="M1 15 l3 -2 M13 15 l-3 -2" stroke="#2766b0" stroke-width="1.200"/><circle cx="12.5" cy="5" r="3.600" fill="#ffe45a" stroke="#d9b51c" stroke-width="0.800"/><rect x="11" y="8.500" width="3" height="2" fill="#9a9a9a"/></svg>
<svg style="left:938px;top:750px;" width="16" height="16"><path d="M1 14 L6 8 L4 6 L9 5 L13 1 L12 6 L9 9 L10 12 L6.500 10 Z" fill="#b9b9b9" stroke="#8a8a8a" stroke-width="0.900"/><path d="M2 9 l3 1 M8 13 l1 -3" stroke="#999" stroke-width="1"/></svg>
<div class="a" style="left:958px;top:749px;width:24px;height:19px;box-sizing:border-box;border:1px solid;border-color:#8c8c8c #fff #fff #8c8c8c;background:#f6f4f4"></div>
<svg style="left:961px;top:750px;" width="18" height="17"><path d="M9 7 V4.500 a3 3 0 0 1 6 0 V6" fill="none" stroke="#c9a21a" stroke-width="2"/><rect x="1.500" y="6.500" width="11" height="8.500" rx="1" fill="#e9c21f" stroke="#6b5500" stroke-width="1"/><path d="M2.500 9.500 h9 M2.500 12 h9" stroke="#8a6d00" stroke-width="1"/><path d="M2.500 8 h9" stroke="#fff3a8" stroke-width="1"/></svg>
<div class="arr" style="left:988px;top:760px"></div>
<div class="a" style="left:1004px;top:750px;width:16px;height:15px;box-sizing:border-box;border:2px solid #2a5fa8;background:linear-gradient(135deg,#a9c5e6,#d9e6f5 60%,#eef4fb)"></div>
<svg width="0" height="0" style="left:0;top:0"><defs>
<linearGradient id="gp" x1="0" y1="0" x2="1" y2="1"><stop offset="0" stop-color="#f4f9fb"/><stop offset="0.5" stop-color="#cfe0e6"/><stop offset="1" stop-color="#9fbfc9"/></linearGradient>
<linearGradient id="gb" x1="0" y1="0" x2="1" y2="1"><stop offset="0" stop-color="#e8f0fa"/><stop offset="1" stop-color="#9dbbe0"/></linearGradient>
<linearGradient id="gd" x1="0" y1="0" x2="0" y2="1"><stop offset="0" stop-color="#5d8fd0"/><stop offset="1" stop-color="#1f4f96"/></linearGradient>
<radialGradient id="gl" cx="0.4" cy="0.35" r="0.7"><stop offset="0" stop-color="#ffffff"/><stop offset="0.6" stop-color="#c9dcf2"/><stop offset="1" stop-color="#8fb0dc"/></radialGradient>
<radialGradient id="gs" cx="0.35" cy="0.3" r="0.8"><stop offset="0" stop-color="#f4f4f4"/><stop offset="0.6" stop-color="#a8a8a8"/><stop offset="1" stop-color="#606060"/></radialGradient>
<radialGradient id="gg" cx="0.35" cy="0.25" r="0.9"><stop offset="0" stop-color="#ffe680"/><stop offset="0.45" stop-color="#f2a020"/><stop offset="0.8" stop-color="#6a3fc0"/><stop offset="1" stop-color="#2b2b9a"/></radialGradient>
<linearGradient id="gy" x1="0" y1="0" x2="1" y2="1"><stop offset="0" stop-color="#ffe58a"/><stop offset="1" stop-color="#d99a1c"/></linearGradient>
<linearGradient id="gc" x1="0" y1="0" x2="1" y2="1"><stop offset="0" stop-color="#f2f7fc"/><stop offset="1" stop-color="#a9c4e4"/></linearGradient>
</defs></svg><svg style="left:16px;top:49px;" width="16" height="16"><path d="M0.500 2.500 H12 L15.500 6 V14.500 H0.500 Z" fill="url(#gp)" stroke="#2b5fa6" stroke-width="1"/><path d="M12 2.500 V6 H15.500" fill="#fff" stroke="#2b5fa6" stroke-width="1"/></svg>
<svg style="left:39px;top:49px;" width="16" height="16"><path d="M1 3 L9 0.500 L15 2 L12 13 L3 15.500 Z" fill="url(#gy)" stroke="#c89b3c" stroke-width="1"/><path d="M3 4.500 L12 2 L10 12.500 L4 14 Z" fill="#e9f2f8" stroke="#b9c9d6" stroke-width="0.6"/><path d="M2 5 L5 14.500 L12 13 L10 5 Z" fill="#e7b84a" opacity="0.85"/><path d="M8 6.500 C5.500 8 6 11.500 9.500 13 L9 14.800 L14 13.500 L11.500 9.800 L11 11.300 C8.500 10.500 8 8.500 9.500 6.800 Z" fill="#1d3f73"/></svg>
<svg style="left:62px;top:49px;" width="16" height="16"><rect x="1" y="1.500" width="14" height="13.500" rx="1" fill="#3f74c8" stroke="#24478f" stroke-width="1"/><rect x="3.500" y="2" width="9" height="6.500" fill="#e8f0f6"/><path d="M5 4h6M5 6h6" stroke="#9fb8cc" stroke-width="1"/><rect x="4" y="10.500" width="8" height="4.500" fill="#dfe6ec"/><rect x="5.500" y="11.500" width="2" height="3.500" fill="#2f5fae"/></svg>
<svg style="left:91px;top:49px;" width="16" height="16"><path d="M4 1 L10 0.500 L12.500 6 L5.500 7 Z" fill="#fff" stroke="#8c98b8" stroke-width="0.800"/><path d="M1.500 7.500 L5 5.500 L13 5 L15 8 L14 12 L6 14 L1.500 11 Z" fill="#cfd6e8" stroke="#5a6a98" stroke-width="1"/><path d="M2 8.500 L6.500 11 L14.500 8.500" fill="none" stroke="#5a6a98" stroke-width="1"/><path d="M6.500 11 V14" stroke="#5a6a98" stroke-width="1"/><path d="M7 12 L12 10.800 L13 13 L8.500 14.500 Z" fill="#fff" stroke="#8c98b8" stroke-width="0.700"/></svg>
<svg style="left:114px;top:49px;" width="16" height="16"><path d="M0.500 0.500 H12 L15.500 4 V12.500 H0.500 Z" fill="url(#gp)" stroke="#2b5fa6" stroke-width="1"/><path d="M12 0.500 V4 H15.500" fill="#fff" stroke="#2b5fa6" stroke-width="1"/><path d="M13.02 11.02 L4.5 15" stroke="#a8641c" stroke-width="2.4" stroke-linecap="round"/><circle cx="10.5" cy="8.5" r="3.6" fill="url(#gl)" stroke="#6b7688" stroke-width="1.5"/></svg>
<svg style="left:136px;top:49px;" width="16" height="16"><circle cx="11" cy="6" r="5" fill="#2a78c8"/><path d="M8 3 C10 1 14 2 15 5 C13 4 10 4 8 6 Z" fill="#7fd0f0"/><path d="M2 9 L6 7 L13 8 L15 11 L13 14 L6 15.500 L1.500 13 Z" fill="#d5dcec" stroke="#5a6a98" stroke-width="1"/><path d="M2 10.500 L6.500 12.500 L14 10.500" fill="none" stroke="#5a6a98" stroke-width="0.900"/><path d="M7 13.500 L12 12.300 L12.500 14 L8 15.300 Z" fill="#fff" stroke="#8c98b8" stroke-width="0.600"/><path d="M2 3 L6 1 L9 4 L8 8 L4 9 L1.500 6 Z" fill="#f3c21a" stroke="#c79200" stroke-width="0.800"/><path d="M3.500 4 L5 5.500 M6.500 3.500 L5 5.500 V7.500" stroke="#fff" stroke-width="1.200" fill="none"/></svg>
<svg style="left:160px;top:49px;" width="16" height="16"><path d="M1 6 L7 9 V16 L1 12.500 Z" fill="#e3e9f3" stroke="#b0bccf" stroke-width="0.700"/><path d="M7 9 L12 7 V13.500 L7 16 Z" fill="#c3cee0"/><circle cx="10.500" cy="6" r="5.500" fill="#2b86c8"/><path d="M6 4 C8 1 12 0.500 14.500 2.500 C12 3.500 8.500 5.500 7 9 C5.800 7.500 5.500 5.500 6 4 Z" fill="#58b8e0"/><path d="M5.500 7 C8 9 13 8 15.500 4.500" stroke="#f0c020" stroke-width="1.300" fill="none"/><path d="M8 1 C6.500 4 8 9.500 11 11.500" stroke="#d83a2a" stroke-width="1.300" fill="none"/><path d="M13 1.200 C14.500 4 13.500 8.500 11 11.500" stroke="#d83a2a" stroke-width="1.100" fill="none"/><path d="M5.200 5 C8 5.500 13 4 15 2.500" stroke="#58c040" stroke-width="1" fill="none"/></svg>
<svg style="left:189px;top:49px;" width="16" height="16"><path d="M0.500 4.500 L11 9.500 M0.500 9.500 L11 7" stroke="#4a5a8c" stroke-width="1.300" fill="none"/><path d="M2 5.500 L9 8.500" stroke="#c8d0e4" stroke-width="0.800"/><circle cx="13" cy="5.500" r="2.200" fill="none" stroke="#1c2f6c" stroke-width="1.500"/><circle cx="12.500" cy="11.500" r="2.200" fill="none" stroke="#1c2f6c" stroke-width="1.500"/></svg>
<svg style="left:212px;top:49px;" width="16" height="16"><path d="M0.500 1.500 H9 L12 4.500 V11.500 H0.500 Z" fill="url(#gp)" stroke="#2b5fa6" stroke-width="1"/><path d="M3.500 4.500 H12 L15.500 8 V15.500 H3.500 Z" fill="url(#gp)" stroke="#2b5fa6" stroke-width="1"/><path d="M12 4.500 V8 H15.500" fill="#fff" stroke="#2b5fa6" stroke-width="1"/></svg>
<svg style="left:234px;top:49px;" width="16" height="16"><path d="M1 6 L6 2 L11 3 L15.500 9 L10 15 L3 14 Z" fill="url(#gy)" stroke="#c8a030" stroke-width="1.200"/><path d="M5 2.500 L7 0.500 L10 1.500 L10.500 3.500 Z" fill="#e8e8e8" stroke="#999" stroke-width="0.700"/><path d="M3.500 5.500 H10 L12.500 8 V12.500 H3.500 Z" fill="url(#gp)" stroke="#2b5fa6" stroke-width="1"/></svg>
<svg style="left:258px;top:49px;" width="16" height="16"><path d="M14 1.500 L8 8.500" stroke="#d8894a" stroke-width="3" stroke-linecap="round"/><path d="M13 1.500 L8.500 6.800" stroke="#f2c090" stroke-width="1"/><path d="M9.500 6 L6.500 10 L8.500 11 L10.800 7.500 Z" fill="#8a8a8a"/><path d="M7 9.500 L1.500 14.500 L8.500 12 Z" fill="#1a1a1a"/></svg>
<svg style="left:281px;top:49px;" width="16" height="16"><path d="M12 0 L7.500 6.500 H10.500 L8.500 12 L15 4.500 H11.500 L14.500 0 Z" fill="#f6c81c" stroke="#c89200" stroke-width="0.800"/><rect x="1.500" y="8.500" width="8" height="6.500" fill="#f08848" stroke="#1f4f96" stroke-width="1.200"/><rect x="2.500" y="9.500" width="6" height="2" fill="#f8b088"/><rect x="0" y="13" width="3" height="3" fill="#1878e0"/></svg>
<svg style="left:311px;top:49px;" width="16" height="16"><path d="M15 3.500 C11 0 4.500 2.500 5.500 10 L8.500 9.500 L4.500 15.500 L0 9.500 L3 10 C2 1.500 11.500 -1.500 15 3.500 Z" fill="#1d3f7c"/><path d="M14 3 C11 1 7 2 6 6" stroke="#4a78c0" stroke-width="1" fill="none"/></svg>
<svg style="left:333px;top:49px;" width="16" height="16"><path d="M1.500 6 h5.500 l-2.750 3z" fill="#1a1a80"/></svg>
<svg style="left:346px;top:49px;" width="16" height="16"><path d="M1 3.500 C5 0 11.500 2.500 10.500 10 L7.500 9.500 L11.500 15.500 L16 9.500 L13 10 C14 1.500 4.500 -1.500 1 3.500 Z" fill="#c4c8cc"/><path d="M2 3 C5 1 9 2 10 6" stroke="#e4e6e8" stroke-width="1" fill="none"/></svg>
<svg style="left:368px;top:49px;" width="16" height="16"><path d="M1.500 6 h5.500 l-2.750 3z" fill="#b4b4c4"/></svg>
<svg style="left:388px;top:49px;" width="16" height="16"><path d="M1 3 L3 2 L5 3 L6.500 1.500 L8 3 L9.500 2.500 L12 9 L8 12.500 L3 10 Z" fill="#e0a0a0" stroke="#a86868" stroke-width="0.800"/><path d="M3 3 L5.500 8 M5 3 L7 7.500 M7 2.500 L8.500 7" stroke="#b87878" stroke-width="0.700"/><path d="M8.500 12 L12 9.500 L15 12 V15.500 H10 Z" fill="#2b5fa6"/><path d="M13.500 0 V7 M10 3.500 H17" stroke="#2b5fa6" stroke-width="1.200"/><path d="M13.500 -0.500 l-1.500 2 h3 z M13.500 7.500 l-1.500 -2 h3 z M9.500 3.500 l2 -1.500 v3 z M17.500 3.500 l-2 -1.500 v3 z" fill="#2b5fa6"/></svg>
<svg style="left:411px;top:49px;" width="16" height="16"><path d="M8.72 9.22 L14 15" stroke="#a8641c" stroke-width="2.4" stroke-linecap="round"/><circle cx="5.5" cy="6" r="4.6" fill="url(#gl)" stroke="#6b7688" stroke-width="1.5"/><path d="M11.500 3 h4 M13.500 1 v4 M11.500 7.500 h4" stroke="#1d3f7c" stroke-width="1.300"/></svg>
<svg style="left:433px;top:49px;" width="16" height="16"><path d="M10 9.5 L13 13" stroke="#a8641c" stroke-width="2.4" stroke-linecap="round"/><circle cx="6.5" cy="6" r="5" fill="url(#gl)" stroke="#6b7688" stroke-width="1.5"/><path d="M4 5.500 H8 M5 4.500 V8 H9 V4" stroke="#2b4f96" stroke-width="1.200" fill="none"/><rect x="4.500" y="4" width="4" height="4" fill="none" stroke="#2b4f96" stroke-width="1.300"/><path d="M16 12 V16 H12 Z" fill="#000"/></svg>
<svg style="left:457px;top:49px;" width="16" height="16"><path d="M9.5 10 L14 15" stroke="#a8641c" stroke-width="2.4" stroke-linecap="round"/><circle cx="6" cy="6.5" r="5" fill="url(#gl)" stroke="#6b7688" stroke-width="1.5"/><path d="M13 4 C12 0.500 7 0.500 6 3.500 L8 4 L4.500 8.500 L2 3 L4 3.500 C5 -0.500 12.500 -1 14.500 3 Z" fill="#1d4f96" stroke="#1d3f7c" stroke-width="0.500"/></svg>
<svg style="left:486px;top:49px;" width="16" height="16"><rect x="0" y="0" width="3" height="4" fill="#f000f0"/><rect x="3" y="0" width="3" height="4" fill="#f02020"/><rect x="6" y="0" width="2" height="4" fill="#f0e000"/><rect x="8" y="0" width="3" height="4" fill="#20d020"/><rect x="11" y="0" width="3" height="4" fill="#20c0f0"/><rect x="14" y="0" width="2" height="4" fill="#2030e0"/><path d="M4 8 L10 4 L14 3.500 L15.500 8 L10 9 L7 8.500 Z" fill="#e8b0a8" stroke="#a87070" stroke-width="0.700"/><path d="M14.500 4 v5" stroke="#2b4f96" stroke-width="1.500"/><path d="M1 7 h5 M1 9 h4" stroke="#d8c840" stroke-width="1.500"/><path d="M1.500 11 q3 2 6 0 M1.500 13.500 q3 2 6 0" stroke="#3b6fb6" stroke-width="1.300" fill="none"/><path d="M9.500 15.500 L12.500 9 L15.500 15.500 M10.500 13 h4" stroke="#333" stroke-width="1.300" fill="none"/></svg>
<svg style="left:509px;top:49px;" width="16" height="16"><rect x="0.500" y="0.500" width="15" height="15" fill="#dbe6f4" stroke="#1d3f8c" stroke-width="1.300"/><rect x="1" y="1" width="4" height="14" fill="#1d3f8c"/><path d="M2.500 2 v12" stroke="#f0e040" stroke-width="1.200" stroke-dasharray="1.500 1.500"/><rect x="6.500" y="2.500" width="2.500" height="2.500" fill="#e8e060" stroke="#2b5fa6" stroke-width="0.700"/><rect x="11" y="2.500" width="2.500" height="2.500" fill="#a8d8a0" stroke="#2b5fa6" stroke-width="0.700"/><rect x="6.500" y="7" width="2.500" height="2.500" fill="#80c8d8" stroke="#2b5fa6" stroke-width="0.700"/><rect x="11" y="7" width="2.500" height="2.500" fill="#e8e060" stroke="#2b5fa6" stroke-width="0.700"/><rect x="9.500" y="11" width="3.500" height="3.500" fill="#f0e860" stroke="#2b5fa6" stroke-width="0.800"/></svg>
<svg style="left:532px;top:49px;" width="16" height="16"><path d="M0.500 0.500 H8 V15.500 H0.500 Z" fill="#dbe6f4" stroke="#1d3f8c" stroke-width="1.300"/><path d="M8 1 H10.500 V12 H8" fill="#b8cce8" stroke="#2b5fa6" stroke-width="0.800"/><rect x="3" y="2.500" width="2.500" height="2.500" fill="#a8d8a0" stroke="#2b5fa6" stroke-width="0.700"/><rect x="3" y="7" width="2.500" height="2.500" fill="#e8e060" stroke="#2b5fa6" stroke-width="0.700"/><rect x="3" y="11" width="2.500" height="2.500" fill="#80d0d8" stroke="#2b5fa6" stroke-width="0.700"/><path d="M6 3.500 C11 2 14 4.500 14 8" stroke="#1d3f7c" stroke-width="1.500" fill="none"/><path d="M11.500 7.500 h5 l-2.500 3 z" fill="#1d3f7c"/><rect x="12" y="11.500" width="3.500" height="3.500" fill="#f0e860" stroke="#1d3f8c" stroke-width="1"/></svg>
<svg style="left:555px;top:49px;" width="16" height="16"><rect x="0" y="1" width="16" height="14.500" fill="#5a98c8"/><path d="M0 15.500 L16 11 V15.500 Z" fill="#3f78a8"/><path d="M0 3 C3 1 6 2 9 4 L14 8 C16 10 15 13 12 12.500 L0 8 Z" fill="#e4e8ec"/><path d="M0 6 L11 10.500 M0 4.500 C4 4 8 6 12 9" stroke="#a8b0b8" stroke-width="0.900" fill="none"/><ellipse cx="13" cy="9.500" rx="2" ry="2.800" fill="#b8c0c8" stroke="#888" stroke-width="0.700"/><path d="M0 8 L12 12.500 L10 14.500 L0 11.500 Z" fill="#c8d0d8"/></svg>
<svg style="left:578px;top:49px;" width="16" height="16"><path d="M4 4.500 H15.500 V15.500 H4" fill="none" stroke="#777" stroke-width="1"/><path d="M2.500 3 H14 V14 H2.500" fill="#e8e8e8" stroke="#555" stroke-width="1"/><rect x="1" y="6" width="12" height="7" fill="#b8d0ec"/><path d="M3 2 C4 0 6.500 0 7 1.500 C9 0 11.500 1 11 3.500 C13 4.500 12.500 7.500 10.500 8 C10.500 10.500 7.500 11 6.500 9.500 C5 11 2 10 2.500 8 C0.500 7.500 0 4 3 2 Z" fill="#e8f0f8" stroke="#e82020" stroke-width="1.600"/></svg>
<svg style="left:601px;top:49px;" width="16" height="16"><rect x="1.500" y="0.500" width="12" height="15.500" rx="1" fill="#1a1a1a"/><rect x="3.500" y="2" width="8" height="2.500" fill="#88b888"/><rect x="3.5" y="7" width="2" height="2" fill="#e82020"/><rect x="6.5" y="7" width="2" height="2" fill="#e82020"/><rect x="9.5" y="7" width="2" height="2" fill="#e82020"/><rect x="3.5" y="10" width="2" height="2" fill="#fff"/><rect x="3.5" y="13" width="2" height="2" fill="#fff"/><rect x="6.5" y="10" width="2" height="2" fill="#fff"/><rect x="6.5" y="13" width="2" height="2" fill="#fff"/><rect x="9.5" y="10" width="2" height="2" fill="#fff"/><rect x="9.5" y="13" width="2" height="2" fill="#fff"/></svg>
<svg style="left:630px;top:49px;" width="16" height="16"><rect x="0.500" y="1" width="15" height="14" rx="2.500" fill="url(#gd)" stroke="#1a3f80" stroke-width="0.800"/><path d="M1.500 3.500 C1.500 2 3 1.500 8 1.500 S14.500 2 14.500 3.500 V6 C10 7 5 5 1.500 7 Z" fill="#6a9ad8" opacity="0.700"/><path d="M5 6 C5 2.500 11 2.500 11 6 C11 8 8.200 8 8.200 10.500" stroke="#fff" stroke-width="2.200" fill="none"/><circle cx="8.200" cy="13" r="1.300" fill="#fff"/></svg>
<svg style="left:671px;top:49px;" width="16" height="16"><ellipse cx="8" cy="8.500" rx="7" ry="3.200" fill="none" stroke="#3b78c8" stroke-width="1.800"/><path d="M2 11 l3.500 -0.500 l-1.500 3 z" fill="#2b5fa6"/><path d="M8 1 v14" stroke="#555" stroke-width="2"/><path d="M8 0 l-2 3 h4 z" fill="#444"/><path d="M8.800 2 v12" stroke="#ccc" stroke-width="0.600"/></svg>
<svg style="left:694px;top:49px;" width="16" height="16"><circle cx="7" cy="8" r="6" fill="url(#gs)"/><path d="M0 15 C5 14 11 8 14 1" stroke="#4a88d8" stroke-width="1.200" fill="none"/><circle cx="10.500" cy="5" r="2" fill="#1878e0" stroke="#fff" stroke-width="0.600"/></svg>
<svg style="left:717px;top:49px;" width="16" height="16"><ellipse cx="8" cy="8" rx="7" ry="5" transform="rotate(-30 8 8)" fill="#28a050"/><ellipse cx="6.500" cy="6.500" rx="3" ry="2" transform="rotate(-30 6.500 6.500)" fill="#70d890"/><circle cx="13" cy="3" r="2.800" fill="#e8d020" stroke="#a89000" stroke-width="0.600"/><path d="M1 14.500 C4 14 7 12 8 9 L5.500 9 L10.500 6 L11 12 L9.500 10.500 C8 13 5 15.500 1 14.500 Z" fill="#1d3f8c" stroke="#fff" stroke-width="0.500"/></svg>
<svg style="left:758px;top:49px;" width="16" height="16"><rect x="0.500" y="5.500" width="13" height="10" fill="url(#gc)" stroke="#2b5fa6" stroke-width="1"/><path d="M3.500 3 v7 M2 4.500 C2 2 5 2 5 4.500 V9" stroke="#2b5fa6" stroke-width="1" fill="none"/><path d="M13.500 1 L15.500 3 L9 11.500 L6.500 12.500 L7 10 Z" fill="#f0b020" stroke="#a86810" stroke-width="0.700"/><path d="M13.500 1 L15.500 3 L14.500 4.200 L12.600 2.300 Z" fill="#e86878"/><path d="M6.500 12.500 L7 10.800 L8.200 11.800 Z" fill="#222"/></svg>
<svg style="left:933px;top:49px;" width="16" height="16"><rect x="5.500" y="5.500" width="10" height="9" fill="url(#gc)" stroke="#222" stroke-width="1.200"/><circle cx="5" cy="11.500" r="2.300" fill="#2b5fa6"/><rect x="9" y="7.500" width="4.500" height="6" fill="#1d4f9c"/><path d="M0 2.500 h5 M2.500 0 v5" stroke="#1d4f9c" stroke-width="1.500"/></svg>
<svg style="left:956px;top:49px;" width="16" height="16"><rect x="5.500" y="5.500" width="10" height="9" fill="url(#gc)" stroke="#222" stroke-width="1.200"/><circle cx="5" cy="11.500" r="2.300" fill="#2b5fa6"/><path d="M0 1.500 h5.500" stroke="#1d4f9c" stroke-width="1.800"/></svg>
<svg style="left:978px;top:49px;" width="16" height="16"><rect x="5.500" y="5.500" width="10" height="9" fill="url(#gc)" stroke="#222" stroke-width="1.200"/><circle cx="5" cy="11.500" r="2.300" fill="#2b5fa6"/><rect x="9" y="7.500" width="4.500" height="6" fill="#1d4f9c"/><path d="M0 0 L5.500 5.500 M5.500 0 L0 5.500" stroke="#e82020" stroke-width="1.600"/></svg>
<svg style="left:1001px;top:49px;" width="16" height="16"><rect x="0.500" y="3.500" width="8" height="10" fill="url(#gc)" stroke="#2b5fa6" stroke-width="1"/><path d="M3.500 1 v7 M2 3 C2 0.500 5 0.500 5 3 V7" stroke="#2b5fa6" stroke-width="1" fill="none"/><rect x="7" y="6.500" width="9" height="9" rx="1" fill="#4a80d0" stroke="#24478f" stroke-width="1"/><rect x="9" y="7" width="5" height="3.500" fill="#e8f0f6"/><rect x="9.500" y="12" width="4" height="3.500" fill="#dfe6ec"/><rect x="10.500" y="12.500" width="1.200" height="3" fill="#2f5fae"/></svg><svg style="left:191px;top:77px;" width="16" height="16"><rect x="0" y="0" width="16.500" height="16" fill="#4a80b8"/><path d="M0 0 h4 l-4 4 z M16.500 0 h-4 l4 4 z M0 16 h4 l-4 -4 z M16.500 16 h-4 l4 -4 z" fill="#b8d0e8"/><rect x="7" y="1.500" width="2.600" height="13" fill="#555" transform="rotate(0 8.300 8)"/><rect x="7" y="1.500" width="2.600" height="13" fill="#555" transform="rotate(45 8.300 8)"/><rect x="7" y="1.500" width="2.600" height="13" fill="#555" transform="rotate(90 8.300 8)"/><rect x="7" y="1.500" width="2.600" height="13" fill="#555" transform="rotate(135 8.300 8)"/><circle cx="8.300" cy="8" r="4.800" fill="#666"/><circle cx="8.300" cy="8" r="2.600" fill="#c8d8e8"/></svg>
<svg style="left:214px;top:77px;" width="16" height="16"><rect x="0.500" y="0.500" width="15" height="15" fill="none" stroke="#888" stroke-width="1" stroke-dasharray="1.500 1.500"/><path d="M12 0 v4 M10 2 h4" stroke="#aaa" stroke-width="1"/><path d="M1.500 8 L8 2 L14.500 8 V14.500 H1.500 Z" fill="#1a1a1a"/><path d="M2 8 L8 2.500 L14 8" stroke="#444" stroke-width="1" fill="none"/></svg>
<svg style="left:255px;top:77px;" width="16" height="16"><path d="M0 10.500 L8 7 L16 10.500 L8 14.500 Z" fill="#a8bcd8" stroke="#7088a8" stroke-width="0.700"/><path d="M0 7.500 L8 4 L16 7.500 L8 11.500 Z" fill="#b8cce4" stroke="#7088a8" stroke-width="0.700"/><path d="M0 4.500 L8 1 L16 4.500 L8 8.500 Z" fill="#c8d8ec" stroke="#7088a8" stroke-width="0.700"/></svg>
<svg style="left:280px;top:77px;" width="12" height="16"><path d="M5.500 0.500 C1.500 0.500 1.500 6 4 8 V10.500 H7.500 V8 C10 6 9.500 0.500 5.500 0.500 Z" fill="#fff8c0" stroke="#d8b820" stroke-width="1.200"/><rect x="4" y="11" width="3.500" height="3.500" rx="1" fill="#5868a0"/></svg>
<svg style="left:295px;top:77px;" width="16" height="16"><rect x="0" y="0.500" width="15" height="15" fill="none" stroke="#e8d020" stroke-width="1" stroke-dasharray="2 11"/><circle cx="7.500" cy="8" r="6.800" fill="#f8e040" stroke="#2b5fa6" stroke-width="1.300"/></svg>
<svg style="left:312px;top:77px;" width="16" height="16"><rect x="6.500" y="7.500" width="8" height="7.500" fill="#f4f4f8" stroke="#5070a8" stroke-width="1"/><circle cx="6" cy="6" r="5.500" fill="#8fb0d8" stroke="#6088b8" stroke-width="0.800"/><circle cx="6" cy="6" r="2.800" fill="none" stroke="#d8e040" stroke-width="1.200"/><path d="M6 1.500 v9 M1.500 6 h9 M2.800 2.800 l6.400 6.400 M9.200 2.800 l-6.400 6.400" stroke="#d8e070" stroke-width="0.700"/></svg>
<svg style="left:330px;top:77px;" width="16" height="16"><path d="M2 8 V4.500 C2 0.500 8 0.500 8 4.500 V6" stroke="#c8b820" stroke-width="2.200" fill="none"/><path d="M2 8 V4.500 C2 0.500 8 0.500 8 4.500 V6" stroke="#f0e860" stroke-width="0.800" fill="none"/><path d="M4.500 8 L12 6.500 L13.500 8 V14 L6 15.500 L4.500 14 Z" fill="#e0d030" stroke="#988800" stroke-width="1"/><path d="M6 9.500 V15 M6 11.500 L13 10 M6 13.500 L13 12" stroke="#988800" stroke-width="0.800" fill="none"/></svg>
<div class="a" style="left:346px;top:80px;width:11px;height:11px;background:#fff;border:1px solid #000;box-sizing:border-box;"></div>
<svg style="left:578px;top:77px;" width="16" height="16"><path d="M0 10.500 L8 7 L16 10.500 L8 14.500 Z" fill="#f0d820" stroke="#7088a8" stroke-width="0.700"/><path d="M0 7.500 L8 4 L16 7.500 L8 11.500 Z" fill="#b8cce4" stroke="#7088a8" stroke-width="0.700"/><path d="M0 4.500 L8 1 L16 4.500 L8 8.500 Z" fill="#c8d8ec" stroke="#7088a8" stroke-width="0.700"/><path d="M0.500 15.500 L5 11 M2 10.500 H5.500 V14" stroke="#1d3f8c" stroke-width="1.300" fill="none"/></svg>
<svg style="left:601px;top:77px;" width="16" height="16"><path d="M0 10.500 L8 7 L16 10.500 L8 14.500 Z" fill="#a8bcd8" stroke="#7088a8" stroke-width="0.700"/><path d="M0 7.500 L8 4 L16 7.500 L8 11.500 Z" fill="#b8cce4" stroke="#7088a8" stroke-width="0.700"/><path d="M0 4.500 L8 1 L16 4.500 L8 8.500 Z" fill="#c8d8ec" stroke="#7088a8" stroke-width="0.700"/><path d="M13 7 C13 2 7 1 5.500 5 L3.500 4 L4.500 9.500 L9.500 7 L7.500 6 C8.500 3.500 11 4.500 11 7 Z" fill="#1d3f8c"/></svg>
<svg style="left:624px;top:77px;" width="16" height="16"><g transform="translate(-2,-1) scale(0.85)"><path d="M0 10.500 L8 7 L16 10.500 L8 14.500 Z" fill="#a8bcd8" stroke="#7088a8" stroke-width="0.700"/><path d="M0 7.500 L8 4 L16 7.500 L8 11.500 Z" fill="#b8cce4" stroke="#7088a8" stroke-width="0.700"/><path d="M0 4.500 L8 1 L16 4.500 L8 8.500 Z" fill="#c8d8ec" stroke="#7088a8" stroke-width="0.700"/></g><rect x="6" y="7.500" width="10" height="8.500" fill="#e8f0fa" stroke="#1d3f8c" stroke-width="1.300"/><rect x="6" y="7.500" width="10" height="2" fill="#1d3f8c"/><path d="M8 12 h6 M8 14 h6" stroke="#6088c0" stroke-width="0.800"/></svg><svg style="left:16px;top:105px;" width="16" height="16"><path d="M1 0.500 V15.500 M15 0.500 V15.500" stroke="#000" fill="none" stroke-width="1.600"/><path d="M1 5.500 H15" stroke="#000" fill="none" stroke-width="1.600"/><path d="M1.5 5.5 l3 -2 v4 z" fill="#000"/><path d="M14.5 5.5 l-3 -2 v4 z" fill="#000"/></svg>
<svg style="left:39px;top:105px;" width="16" height="16"><path d="M0.500 5 L5 0.500 M11 15.500 L15.500 11 M3 3 L13 13" stroke="#000" fill="none" stroke-width="1.700"/><path d="M3 3 l4 1 l-3 3z M13 13 l-4 -1 l3 -3z" fill="#000"/></svg>
<svg style="left:62px;top:105px;" width="16" height="16"><path d="M1.500 13 C3 6 7 2.500 13 1.500" stroke="#444" stroke-width="1.300" fill="none"/><path d="M6.500 14 C7 9.500 9 7 13.500 6" stroke="#000" fill="none" stroke-width="1.500"/><path d="M5 12 l1.500 3.500 l2 -3.500z M12 4 l3.500 2 l-3.500 2z" fill="#000"/><rect x="0" y="13" width="3" height="3" fill="#1878e0"/><rect x="12.500" y="0" width="3" height="3" fill="#1878e0"/></svg>
<svg style="left:85px;top:105px;" width="16" height="16"><path d="M5.500 5 V15.500 M5.500 14.500 H16 M5.500 5 L11 10 V15 M11 8.500 H16 M14 5 V8.500" stroke="#000" fill="none" stroke-width="1.400"/><text x="0" y="10" font-size="6" font-weight="bold" fill="#1d3f8c" font-family="Liberation Sans">Y</text><text x="12" y="4.500" font-size="6" font-weight="bold" fill="#1d3f8c" font-family="Liberation Sans">X</text><text x="4" y="4.500" font-size="6" font-weight="bold" fill="#1d3f8c" font-family="Liberation Sans">0</text><text x="0" y="16" font-size="6" font-weight="bold" fill="#1d3f8c" font-family="Liberation Sans">0</text></svg>
<svg style="left:114px;top:105px;" width="16" height="16"><circle cx="8" cy="8" r="7.300" stroke="#444" stroke-width="1.200" fill="none"/><path d="M8.500 8.500 L4 4" stroke="#000" fill="none" stroke-width="1.600"/><path d="M3 3 l4.500 1 l-3.500 3.500z" fill="#000"/></svg>
<svg style="left:138px;top:105px;" width="16" height="16"><path d="M2 2.500 C8 -1 15 4 13 12" stroke="#555" stroke-width="1.200" fill="none"/><path d="M1.500 15 L7.500 9.500 L6 8.500 L10.500 4.500" stroke="#000" fill="none" stroke-width="1.700"/><path d="M12.500 2.500 l-5 1.500 l3.500 3.500z" fill="#000"/></svg>
<svg style="left:160px;top:105px;" width="16" height="16"><circle cx="8" cy="8" r="7.300" stroke="#444" stroke-width="1.200" fill="none"/><path d="M4 4 L12 12" stroke="#000" fill="none" stroke-width="1.600"/><path d="M2.800 2.800 l4.500 1 l-3.500 3.500z M13.200 13.200 l-4.500 -1 l3.500 -3.500z" fill="#000"/></svg>
<svg style="left:183px;top:105px;" width="16" height="16"><path d="M0.500 15 H15.500 M0.500 10 L10 0.500" stroke="#000" fill="none" stroke-width="1.500"/><path d="M9 3 C13 6 14.500 10 14.500 13.500" stroke="#000" fill="none" stroke-width="1.200"/><path d="M8 2 l4 0.500 l-2.500 3z M14.500 15 l-2 -3.500 h4z" fill="#000"/></svg>
<svg style="left:212px;top:105px;" width="16" height="16"><path d="M1 0.500 V15.500 M15 0.500 V15.500 M1 4.500 H15" stroke="#000" fill="none" stroke-width="1.600"/><path d="M1.5 4.5 l3 -2 v4 z" fill="#000"/><path d="M14.5 4.5 l-3 -2 v4 z" fill="#000"/><path d="M4 0.500 L9.500 0.500 L8.500 4.500 L13 5 L13.500 15.500 L6 8 L9.500 8 Z" fill="#f4e420" stroke="#587820" stroke-width="0.900"/></svg>
<svg style="left:235px;top:105px;" width="16" height="16"><path d="M1 0.500 V15.500 M10.500 8 V15.500 M1 3.500 H15 M1 10.500 H10.500" stroke="#000" fill="none" stroke-width="1.500"/><path d="M15.5 3.5 l-3 -2 v4 z" fill="#000"/><path d="M1.5 10.5 l3 -2 v4 z" fill="#000"/><path d="M10 10.5 l-3 -2 v4 z" fill="#000"/></svg>
<svg style="left:258px;top:105px;" width="16" height="16"><path d="M1 0.500 V15.500 M8.500 0.500 V15.500 M15.500 0.500 V15.500 M1 5 H15.500" stroke="#000" fill="none" stroke-width="1.500"/><path d="M1.5 5 l3 -2 v4 z" fill="#000"/><path d="M8 5 l-3 -2 v4 z" fill="#000"/><path d="M9 5 l3 -2 v4 z" fill="#000"/><path d="M15 5 l-3 -2 v4 z" fill="#000"/></svg>
<svg style="left:281px;top:105px;" width="16" height="16"><path d="M0.500 0.500 V4.500 M15.500 0.500 V4.500 M0.500 2.500 H15.500 M0.500 11.500 V15.500 M15.500 11.500 V15.500 M0.500 13.500 H15.500" stroke="#000" fill="none" stroke-width="1.400"/><path d="M1 2.5 l3 -2 v4 z" fill="#000"/><path d="M15 2.5 l-3 -2 v4 z" fill="#000"/><path d="M1 13.5 l3 -2 v4 z" fill="#000"/><path d="M15 13.5 l-3 -2 v4 z" fill="#000"/><rect x="8" y="4.500" width="4" height="7" fill="#e8a020" stroke="#a06000" stroke-width="0.800"/><path d="M8.500 6.500 h2 M8.500 8 h2 M8.500 9.500 h2" stroke="#fff" stroke-width="0.700"/><path d="M5 4.500 v7 M3.500 5 h3 M3.500 11 h3" stroke="#2b6fc8" stroke-width="1.200"/></svg>
<svg style="left:304px;top:105px;" width="16" height="16"><path d="M8 0.500 V14 M5 15 H11" stroke="#000" fill="none" stroke-width="1.700"/><path d="M8 15 l-3 -3 h6z" fill="#000"/><path d="M0.500 6.500 H4 M10.500 6.500 H15 M15.500 4 V9" stroke="#2b5fa6" stroke-width="1.500" fill="none"/><path d="M15 6.500 l-3.500 -2 v4z" fill="#2b5fa6"/></svg>
<svg style="left:333px;top:105px;" width="16" height="16"><rect x="0.500" y="2.500" width="15.500" height="11" fill="#b8d0ec" stroke="#1d4f9c" stroke-width="1.300"/><path d="M8.500 2.500 V13.500" stroke="#1d4f9c" stroke-width="1.200"/><circle cx="4.500" cy="8" r="2.500" fill="none" stroke="#1d4f9c" stroke-width="1"/><path d="M4.500 3.500 v9 M1.500 8 h6" stroke="#1d4f9c" stroke-width="0.900"/><path d="M10 12 h1.200 M13 5 v7 M13 5 l-1.300 1.300" stroke="#1d4f9c" stroke-width="1.300" fill="none"/></svg>
<svg style="left:356px;top:105px;" width="16" height="16"><circle cx="8" cy="8" r="7.300" stroke="#444" stroke-width="1.200" fill="#f8f8f8"/><path d="M8 4.500 V11.500 M4.500 8 H11.500" stroke="#000" fill="none" stroke-width="1.800"/></svg>
<svg style="left:379px;top:105px;" width="16" height="16"><path d="M1 1.500 V8 M15.500 1.500 V8 M1 4.500 H15.500" stroke="#000" fill="none" stroke-width="1.500"/><path d="M1.5 4.5 l3 -2 v4 z" fill="#000"/><path d="M15 4.5 l-3 -2 v4 z" fill="#000"/><circle cx="9.500" cy="10.500" r="4.300" fill="#48b030" stroke="#2a8018" stroke-width="0.700"/><path d="M7 10.500 L9 12.500 L12.500 8.500" stroke="#fff" stroke-width="1.600" fill="none"/></svg>
<svg style="left:402px;top:105px;" width="16" height="16"><path d="M1 4.500 V11.500" stroke="#000" fill="none" stroke-width="1.600"/><path d="M1 8 H5 L8 2.500 L11 14 L13 8.500 L15.500 8" stroke="#333" stroke-width="1.300" fill="none"/><path d="M1.5 8 l3 -2 v4 z" fill="#000"/></svg>
<svg style="left:431px;top:105px;" width="16" height="16"><path d="M1 9.500 V15.500 M15.500 9.500 V15.500 M1 12.500 H15.500" stroke="#000" fill="none" stroke-width="1.600"/><path d="M1.5 12.5 l3 -2 v4 z" fill="#000"/><path d="M15 12.5 l-3 -2 v4 z" fill="#000"/><path d="M4.500 8 L8 0.500 L11.500 8 M5.800 5.500 H10.200" stroke="#1d4f9c" stroke-width="1.900" fill="none"/></svg>
<svg style="left:454px;top:105px;" width="16" height="16"><path d="M1 9.500 V15.500 M15.500 9.500 V15.500 M1 12.500 H15.500" stroke="#000" fill="none" stroke-width="1.600"/><path d="M1.5 12.5 l3 -2 v4 z" fill="#000"/><path d="M15 12.5 l-3 -2 v4 z" fill="#000"/><path d="M12.500 0 L14.500 2 L8 11 L6 11.500 L6.500 9.500 Z" fill="#f0b020" stroke="#a86810" stroke-width="0.600"/><path d="M12.500 0 L14.500 2 L13.500 3.300 L11.600 1.300 Z" fill="#e87088"/><path d="M6 11.500 L6.500 10 L7.500 11 Z" fill="#222"/></svg>
<svg style="left:477px;top:105px;" width="16" height="16"><path d="M1 7 V15.500 M13 7 V15.500 M1 10.500 H13" stroke="#000" fill="none" stroke-width="1.600"/><path d="M1.5 10.5 l3 -2 v4 z" fill="#000"/><path d="M12.5 10.5 l-3 -2 v4 z" fill="#000"/><path d="M3.500 1 V10 M15.500 1 V10 M3.500 4 H15.500" stroke="#2b5fa6" stroke-width="1.400" fill="none"/><path d="M4 4 l3 -2 v4z M15 4 l-3 -2 v4z" fill="#2b5fa6"/></svg>
<svg style="left:626px;top:105px;" width="16" height="16"><path d="M1 10.500 V15.500 M15.500 10.500 V15.500 M1 13 H15.500" stroke="#000" fill="none" stroke-width="1.500"/><path d="M1.5 13 l3 -2 v4 z" fill="#000"/><path d="M15 13 l-3 -2 v4 z" fill="#000"/><path d="M15.500 0.500 L9 9" stroke="#c87838" stroke-width="2.200"/><path d="M15 0.500 L11 5.500" stroke="#f0c090" stroke-width="0.800"/><path d="M10 7 L7.500 10 L9 11 L11 8.500 Z" fill="#777"/><path d="M8 9.500 L3.500 12.500 L9 11.500 Z" fill="#111"/></svg>
<svg style="left:667px;top:105px;" width="16" height="16"><path d="M0.500 0.500 H10 L13 3.500 V8 H0.500 Z" fill="url(#gc)" stroke="#2b5fa6" stroke-width="1"/><path d="M0.500 0.500 V13 H5" fill="none" stroke="#2b5fa6" stroke-width="1"/><path d="M4.500 8.500 L1 13.500" stroke="#c87828" stroke-width="2"/><circle cx="6.500" cy="5.500" r="3.300" fill="url(#gl)" stroke="#7888a0" stroke-width="1.200"/><rect x="4.500" y="7.500" width="11" height="8" fill="#e8f0fa" stroke="#1d4f9c" stroke-width="1.300"/><rect x="4.500" y="7.500" width="11" height="2" fill="#1d4f9c"/><path d="M7 12 h6 M7 13.800 h6" stroke="#5080c0" stroke-width="0.800"/></svg>
<svg style="left:696px;top:105px;" width="16" height="16"><path d="M0.500 5 H11 V15.500 H0.500 Z M0.500 5 L5 0.500 H15.500 L11 5 M15.500 0.500 V11 L11 15.500" fill="url(#gc)" stroke="#2b5fa6" stroke-width="1"/><path d="M0.500 5 L5 0.500 H15.500 V11 L11 15.500 H0.500 Z" fill="url(#gc)" stroke="none"/><path d="M5 0.500 V11 H15.500 M5 11 L0.500 15.500" fill="none" stroke="#88a4cc" stroke-width="0.800"/><path d="M0.500 5 L5 0.500 H15.500 L11 5 Z" fill="#24579c"/><path d="M0.500 5 H11 V15.500 H0.500 Z M0.500 5 L5 0.500 H15.500 L11 5 M15.500 0.500 V11 L11 15.500" fill="none" stroke="#2b5fa6" stroke-width="1.100"/></svg>
<svg style="left:719px;top:105px;" width="16" height="16"><path d="M0.500 5 H11 V15.500 H0.500 Z M0.500 5 L5 0.500 H15.500 L11 5 M15.500 0.500 V11 L11 15.500" fill="url(#gc)" stroke="#2b5fa6" stroke-width="1"/><path d="M0.500 5 L5 0.500 H15.500 V11 L11 15.500 H0.500 Z" fill="url(#gc)" stroke="none"/><path d="M0.500 15.500 L5 11 H15.500 L11 15.500 Z" fill="#24579c"/><path d="M5 0.500 V11 H15.500 M5 11 L0.500 15.500" fill="none" stroke="#88a4cc" stroke-width="0.800"/><path d="M0.500 5 H11 V15.500 H0.500 Z M0.500 5 L5 0.500 H15.500 L11 5 M15.500 0.500 V11 L11 15.500" fill="none" stroke="#2b5fa6" stroke-width="1.100"/></svg>
<svg style="left:742px;top:105px;" width="16" height="16"><path d="M0.500 5 H11 V15.500 H0.500 Z M0.500 5 L5 0.500 H15.500 L11 5 M15.500 0.500 V11 L11 15.500" fill="url(#gc)" stroke="#2b5fa6" stroke-width="1"/><path d="M0.500 5 L5 0.500 H15.500 V11 L11 15.500 H0.500 Z" fill="url(#gc)" stroke="none"/><path d="M0.500 5 L5 0.500 V11 L0.500 15.500 Z" fill="#24579c"/><path d="M5 0.500 V11 H15.500 M5 11 L0.500 15.500" fill="none" stroke="#88a4cc" stroke-width="0.800"/><path d="M0.500 5 H11 V15.500 H0.500 Z M0.500 5 L5 0.500 H15.500 L11 5 M15.500 0.500 V11 L11 15.500" fill="none" stroke="#2b5fa6" stroke-width="1.100"/></svg>
<svg style="left:765px;top:105px;" width="16" height="16"><path d="M0.500 5 H11 V15.500 H0.500 Z M0.500 5 L5 0.500 H15.500 L11 5 M15.500 0.500 V11 L11 15.500" fill="url(#gc)" stroke="#2b5fa6" stroke-width="1"/><path d="M0.500 5 L5 0.500 H15.500 V11 L11 15.500 H0.500 Z" fill="url(#gc)" stroke="none"/><path d="M5 0.500 V11 H15.500 M5 11 L0.500 15.500" fill="none" stroke="#88a4cc" stroke-width="0.800"/><path d="M11 5 L15.500 0.500 V11 L11 15.500 Z" fill="#24579c"/><path d="M0.500 5 H11 V15.500 H0.500 Z M0.500 5 L5 0.500 H15.500 L11 5 M15.500 0.500 V11 L11 15.500" fill="none" stroke="#2b5fa6" stroke-width="1.100"/></svg>
<svg style="left:788px;top:105px;" width="16" height="16"><path d="M0.500 5 H11 V15.500 H0.500 Z M0.500 5 L5 0.500 H15.500 L11 5 M15.500 0.500 V11 L11 15.500" fill="url(#gc)" stroke="#2b5fa6" stroke-width="1"/><path d="M0.500 5 L5 0.500 H15.500 V11 L11 15.500 H0.500 Z" fill="url(#gc)" stroke="none"/><path d="M5 0.500 V11 H15.500 M5 11 L0.500 15.500" fill="none" stroke="#88a4cc" stroke-width="0.800"/><path d="M0.500 5 H11 V15.500 H0.500 Z" fill="#24579c"/><path d="M0.500 5 H11 V15.500 H0.500 Z M0.500 5 L5 0.500 H15.500 L11 5 M15.500 0.500 V11 L11 15.500" fill="none" stroke="#2b5fa6" stroke-width="1.100"/></svg>
<svg style="left:811px;top:105px;" width="16" height="16"><path d="M0.500 5 H11 V15.500 H0.500 Z M0.500 5 L5 0.500 H15.500 L11 5 M15.500 0.500 V11 L11 15.500" fill="url(#gc)" stroke="#2b5fa6" stroke-width="1"/><path d="M0.500 5 L5 0.500 H15.500 V11 L11 15.500 H0.500 Z" fill="url(#gc)" stroke="none"/><path d="M5 0.500 H15.500 V11 H5 Z" fill="#24579c"/><path d="M5 0.500 V11 H15.500 M5 11 L0.500 15.500" fill="none" stroke="#88a4cc" stroke-width="0.800"/><path d="M0.500 5 H11 V15.500 H0.500 Z M0.500 5 L5 0.500 H15.500 L11 5 M15.500 0.500 V11 L11 15.500" fill="none" stroke="#2b5fa6" stroke-width="1.100"/></svg>
<svg style="left:840px;top:105px;" width="14" height="16"><path d="M7 0.500 L13.500 5 V11 L7 15.500 L0.500 11 V5 Z" fill="url(#gc)" stroke="#2b5fa6" stroke-width="1"/><path d="M0.500 5 L7 9.500 V15.500 L0.500 11 Z" fill="#24579c"/><path d="M0.500 5 L7 9.500 L13.500 5 M7 9.500 V15.500" fill="none" stroke="#5a82bc" stroke-width="0.900"/><path d="M7 0.500 L13.500 5 V11 L7 15.500 L0.500 11 V5 Z" fill="none" stroke="#2b5fa6" stroke-width="1"/></svg>
<svg style="left:863px;top:105px;" width="14" height="16"><path d="M7 0.500 L13.500 5 V11 L7 15.500 L0.500 11 V5 Z" fill="url(#gc)" stroke="#2b5fa6" stroke-width="1"/><path d="M13.500 5 L7 9.500 V15.500 L13.500 11 Z" fill="#24579c"/><path d="M0.500 5 L7 9.500 L13.500 5 M7 9.500 V15.500" fill="none" stroke="#5a82bc" stroke-width="0.900"/><path d="M7 0.500 L13.500 5 V11 L7 15.500 L0.500 11 V5 Z" fill="none" stroke="#2b5fa6" stroke-width="1"/></svg>
<svg style="left:887px;top:105px;" width="14" height="16"><path d="M7 0.500 L13.500 5 V11 L7 15.500 L0.500 11 V5 Z" fill="url(#gc)" stroke="#2b5fa6" stroke-width="1"/><path d="M7 0.500 L13.500 5 V11 L7 6.500 Z" fill="#24579c"/><path d="M0.500 11 L7 6.500 L13.500 11 M7 6.500 V0.500" fill="none" stroke="#5a82bc" stroke-width="0.900"/><path d="M7 0.500 L13.500 5 V11 L7 15.500 L0.500 11 V5 Z" fill="none" stroke="#2b5fa6" stroke-width="1"/></svg>
<svg style="left:910px;top:105px;" width="14" height="16"><path d="M7 0.500 L13.500 5 V11 L7 15.500 L0.500 11 V5 Z" fill="url(#gc)" stroke="#2b5fa6" stroke-width="1"/><path d="M7 0.500 L0.500 5 V11 L7 6.500 Z" fill="#24579c"/><path d="M0.500 11 L7 6.500 L13.500 11 M7 6.500 V0.500" fill="none" stroke="#5a82bc" stroke-width="0.900"/><path d="M7 0.500 L13.500 5 V11 L7 15.500 L0.500 11 V5 Z" fill="none" stroke="#2b5fa6" stroke-width="1"/></svg>
<svg style="left:938px;top:105px;" width="16" height="16"><path d="M0.500 6 H3 L4 4 H8 L9 6 H16 V15 H0.500 Z" fill="#1a1a2a" stroke="#000" stroke-width="0.600"/><rect x="1.500" y="7" width="2.500" height="7" fill="#4a5068"/><circle cx="10" cy="10.500" r="3.800" fill="#3a4058" stroke="#8088a0" stroke-width="0.800"/><circle cx="10" cy="10.500" r="2" fill="#8898c0"/><path d="M11 0 L11.800 3.200 L15 2 L12.800 4.500 L16 5.500 L12.800 6 L14 9 L11.500 6.800 L10.500 10 L10 6.800 L7 8.500 L9 5.800 L6 5 L9.200 4.200 L8 1.500 L10.500 3.500 Z" fill="#e8f4ff" opacity="0.950"/><circle cx="11" cy="5" r="1.800" fill="#fff"/></svg>
<svg style="left:967px;top:105px;" width="16" height="16"><circle cx="8" cy="8" r="7.300" fill="#f4f7fb" stroke="#a8bcd8" stroke-width="1.300"/><path d="M3.500 8 L8.500 3.500 V6 H12.500 V10 H8.500 V12.500 Z" fill="#a8bcd4" stroke="#8ca4c4" stroke-width="0.600"/></svg><svg style="left:4px;top:140px;" width="16" height="16"><path d="M2 13.500 L14 2.500" stroke="#111" fill="none" stroke-width="1.500"/><rect x="0.5" y="12" width="3" height="3" fill="#1878e0"/><rect x="12.5" y="1" width="3" height="3" fill="#1878e0"/></svg>
<svg style="left:4px;top:162px;" width="16" height="16"><path d="M1.500 14.500 L14.500 1.500" stroke="#111" fill="none" stroke-width="1.500"/><path d="M0 16 l2 -5 l3 3z M16 0 l-2 5 l-3 -3z" fill="#111"/><rect x="6.5" y="6.5" width="3" height="3" fill="#1878e0"/></svg>
<svg style="left:4px;top:184px;" width="16" height="16"><path d="M1 11.500 H10 C15.500 11.500 15.500 4 10 4" stroke="#111" fill="none" stroke-width="1.500"/><rect x="0" y="10" width="3" height="3" fill="#1878e0"/><rect x="8.5" y="10" width="3" height="3" fill="#1878e0"/><rect x="8.5" y="2.5" width="3" height="3" fill="#1878e0"/></svg>
<svg style="left:4px;top:206px;" width="16" height="16"><path d="M8 1.500 L15 6.500 L12.500 14.500 H3.500 L1 6.500 Z" fill="url(#gc)" stroke="#222" stroke-width="1.500"/></svg>
<svg style="left:4px;top:228px;" width="16" height="16"><rect x="1.500" y="4.500" width="13" height="8" fill="url(#gc)" stroke="#222" stroke-width="1.500"/><rect x="0" y="11" width="3" height="3" fill="#1878e0"/><rect x="13" y="3" width="3" height="3" fill="#1878e0"/></svg>
<svg style="left:4px;top:250px;" width="16" height="16"><path d="M1.500 14.500 C2 7 7 2.500 14.500 2" stroke="#111" fill="none" stroke-width="1.500"/><rect x="0" y="13" width="3" height="3" fill="#1878e0"/><rect x="4.5" y="4.5" width="3" height="3" fill="#1878e0"/><rect x="13" y="0.5" width="3" height="3" fill="#1878e0"/></svg>
<svg style="left:4px;top:272px;" width="16" height="16"><circle cx="8" cy="8" r="7" fill="url(#gc)" stroke="#222" stroke-width="1.500"/><path d="M8 8.500 L13 3" stroke="#1d4f9c" stroke-width="1.500"/><rect x="6" y="7" width="3" height="3" fill="#1878e0"/></svg>
<svg style="left:4px;top:294px;" width="16" height="16"><path d="M3 6 C0 4 2 0 6 2 C8 -0.500 13 1 12 4.500 C16 5 16 10 13 10.500 C15 14 10 16 8 13 C5 15 2 12 4 10 C0 10 0 6 3 6 Z" fill="url(#gc)" stroke="#222" stroke-width="1.400"/></svg>
<svg style="left:4px;top:316px;" width="16" height="16"><path d="M1 14 C2 4 6 6 8 8 C11 11 14 9 15 2" stroke="#333" stroke-width="1.400" fill="none"/></svg>
<svg style="left:4px;top:338px;" width="16" height="16"><ellipse cx="8" cy="8.500" rx="7" ry="4.500" fill="url(#gc)" stroke="#111" stroke-width="1.600"/><rect x="-0.5" y="7" width="3" height="3" fill="#1878e0"/><rect x="13.5" y="7" width="3" height="3" fill="#1878e0"/><rect x="6.5" y="2.5" width="3" height="3" fill="#1878e0"/></svg>
<svg style="left:4px;top:360px;" width="16" height="16"><path d="M3 8 C3 2 15 3 14.500 8.500 C14 12 10 13 8 12" fill="none" stroke="#111" stroke-width="1.600"/><path d="M3 8 C3 2 15 3 14.500 8.500 C14 12 10 13 8 12 Z" fill="url(#gc)" opacity="0.600"/><rect x="1" y="6.5" width="3" height="3" fill="#1878e0"/><rect x="6.5" y="11" width="3" height="3" fill="#1878e0"/></svg>
<svg style="left:4px;top:382px;" width="16" height="16"><path d="M5 2.500 H12 L14.500 5 V13 H5 Z" fill="url(#gc)" stroke="#7898c0" stroke-width="1"/><rect x="1.500" y="5" width="8" height="6" fill="#e8e060" stroke="#1d4f9c" stroke-width="1.200"/><circle cx="10" cy="11.500" r="3.200" fill="#d8d060" stroke="#1d4f9c" stroke-width="1.200"/><rect x="0.25" y="9.75" width="2.5" height="2.5" fill="#1878e0"/><path d="M16 12 V16 H12 Z" fill="#000"/></svg>
<svg style="left:4px;top:404px;" width="16" height="16"><rect x="2.500" y="2.500" width="8.500" height="6.500" fill="#e8e060" stroke="#1d4f9c" stroke-width="1.300"/><circle cx="11" cy="10.500" r="3.500" fill="#d8d060" stroke="#1d4f9c" stroke-width="1.300"/><rect x="1.25" y="7.75" width="2.5" height="2.5" fill="#1878e0"/></svg>
<svg style="left:4px;top:426px;" width="16" height="16"><rect x="6.5" y="7" width="3" height="3" fill="#1858c0"/></svg>
<svg style="left:4px;top:448px;" width="16" height="16"><rect x="3" y="3" width="10" height="10" fill="#dce8f6"/><path d="M3 7 L7 3 M3 10 L10 3 M3 13 L13 3 M6 13 L13 6 M9 13 L13 9" stroke="#1d4f9c" stroke-width="0.900"/><path d="M3 0.500 V16 M13 0.500 V16 M0 3 H16 M0 13 H16" stroke="#1d4f9c" stroke-width="1.500"/></svg>
<svg style="left:4px;top:470px;" width="16" height="16"><defs><linearGradient id="ggr" x1="0" y1="0" x2="1" y2="1"><stop offset="0" stop-color="#1a2050"/><stop offset="1" stop-color="#a8a878"/></linearGradient></defs><rect x="3" y="3" width="10" height="10" fill="url(#ggr)"/><path d="M3 0.500 V16 M13 0.500 V16 M0 3 H16 M0 13 H16" stroke="#101828" stroke-width="1.600"/><path d="M8 13 L13 6" stroke="#101828" stroke-width="1"/></svg>
<svg style="left:4px;top:492px;" width="16" height="16"><path d="M0.500 2.500 H10 L15.500 8 V14.500 H0.500 Z" fill="url(#gc)" stroke="#1d4f9c" stroke-width="1.400"/><circle cx="7.500" cy="9" r="3" fill="#e8eef8" stroke="#667" stroke-width="1.200"/></svg>
<svg style="left:4px;top:514px;" width="16" height="16"><rect x="1" y="2" width="14" height="12.500" rx="1" fill="#4a78c8"/><rect x="1" y="2" width="14" height="3" fill="#88a8e0"/><rect x="2" y="6" width="3.500" height="2.300" fill="#eef2fa"/><rect x="2" y="9" width="3.500" height="2.300" fill="#eef2fa"/><rect x="2" y="12" width="3.500" height="2.300" fill="#eef2fa"/><rect x="6.3" y="6" width="3.500" height="2.300" fill="#eef2fa"/><rect x="6.3" y="9" width="3.500" height="2.300" fill="#eef2fa"/><rect x="6.3" y="12" width="3.500" height="2.300" fill="#eef2fa"/><rect x="10.6" y="6" width="3.500" height="2.300" fill="#eef2fa"/><rect x="10.6" y="9" width="3.500" height="2.300" fill="#eef2fa"/><rect x="10.6" y="12" width="3.500" height="2.300" fill="#eef2fa"/></svg>
<svg style="left:4px;top:536px;" width="16" height="16"><text x="-1" y="15.500" font-size="20" fill="#111" font-family="Liberation Sans">A</text></svg>
<svg style="left:30px;top:140px;" width="16" height="16"><path d="M2 8 H13" stroke="#333" stroke-width="1.600"/><rect x="0.25" y="6.25" width="3.5" height="3.5" fill="#1858c0"/><circle cx="13.5" cy="8" r="2.3" fill="#fff" stroke="#1878e0" stroke-width="1.300"/></svg>
<svg style="left:30px;top:162px;" width="16" height="16"><path d="M2 12 V6.500" stroke="#222" stroke-width="1.400" stroke-dasharray="1.500 1.200"/><path d="M2 6 H13" stroke="#333" stroke-width="1.600"/><rect x="0.25" y="12.25" width="3.5" height="3.5" fill="#1858c0"/><circle cx="13.5" cy="6" r="2.3" fill="#fff" stroke="#1878e0" stroke-width="1.300"/></svg>
<svg style="left:30px;top:190px;" width="16" height="16"><path d="M3 13 L13 3" stroke="#222" stroke-width="1.500"/><circle cx="2.5" cy="13.5" r="2.3" fill="#fff" stroke="#1878e0" stroke-width="1.300"/><circle cx="13.5" cy="2.5" r="2.3" fill="#fff" stroke="#1878e0" stroke-width="1.300"/></svg>
<svg style="left:30px;top:213px;" width="16" height="16"><path d="M1.500 14.500 L14.500 1.500" stroke="#222" stroke-width="1.500"/><circle cx="7.5" cy="8.5" r="2.3" fill="#fff" stroke="#1878e0" stroke-width="1.300"/></svg>
<svg style="left:30px;top:235px;" width="16" height="16"><path d="M1.500 1.500 L14.500 14.500 M14.500 1.500 L1.500 14.500" stroke="#222" stroke-width="1.500"/><circle cx="8" cy="8" r="2.2" fill="#fff" stroke="#1878e0" stroke-width="1.300"/></svg>
<svg style="left:30px;top:257px;" width="16" height="16"><path d="M1.500 1.500 L14.500 14.500" stroke="#222" stroke-width="1.500"/><path d="M14.500 1.500 L1.500 14.500" stroke="#222" stroke-width="1.500" stroke-dasharray="2.500 1.500"/><circle cx="8" cy="8" r="2.2" fill="#fff" stroke="#1878e0" stroke-width="1.300"/></svg>
<svg style="left:30px;top:279px;" width="16" height="16"><path d="M1 8 H8" stroke="#333" stroke-width="1.800"/><path d="M9 8 H16" stroke="#333" stroke-width="1.800" stroke-dasharray="1.500 1"/></svg>
<svg style="left:30px;top:306px;" width="16" height="16"><circle cx="8" cy="8" r="7" fill="url(#gc)" stroke="#222" stroke-width="1.500"/><circle cx="8" cy="8" r="2" fill="#fff" stroke="#1878e0" stroke-width="1.300"/></svg>
<svg style="left:30px;top:328px;" width="16" height="16"><path d="M8 1.500 L14.500 8 L8 14.500 L1.500 8 Z" fill="none" stroke="#222" stroke-width="1.300"/><circle cx="8" cy="8" r="5" fill="url(#gc)" stroke="#1878e0" stroke-width="1"/><circle cx="8" cy="1.8" r="1.9" fill="#fff" stroke="#1878e0" stroke-width="1.300"/><circle cx="14.2" cy="8" r="1.9" fill="#fff" stroke="#1878e0" stroke-width="1.300"/><circle cx="8" cy="14.2" r="1.9" fill="#fff" stroke="#1878e0" stroke-width="1.300"/><circle cx="1.8" cy="8" r="1.9" fill="#fff" stroke="#1878e0" stroke-width="1.300"/></svg>
<svg style="left:30px;top:350px;" width="16" height="16"><circle cx="9" cy="9" r="6.300" fill="url(#gc)" stroke="#222" stroke-width="1.500"/><path d="M1 9 L10 0.500" stroke="#222" stroke-width="1.300"/><circle cx="4.5" cy="4.5" r="1.9" fill="#fff" stroke="#1878e0" stroke-width="1.300"/></svg>
<svg style="left:30px;top:380px;" width="16" height="16"><path d="M8 0.500 V13 M1 13 H15.500" stroke="#222" stroke-width="1.600"/><circle cx="8" cy="13" r="2.1" fill="#fff" stroke="#1878e0" stroke-width="1.300"/></svg>
<svg style="left:30px;top:401px;" width="16" height="16"><path d="M1.500 11.500 L13 0.500 M3.500 15 L15.500 3.500" stroke="#111" stroke-width="1.700"/></svg>
<svg style="left:30px;top:423px;" width="16" height="16"><rect x="4" y="2" width="8.500" height="6.500" fill="#e8e060" stroke="#1d4f9c" stroke-width="1.300"/><circle cx="11" cy="10.500" r="3.500" fill="#d8d060" stroke="#1d4f9c" stroke-width="1.300"/><circle cx="3.5" cy="8" r="2" fill="#fff" stroke="#1878e0" stroke-width="1.300"/></svg>
<svg style="left:30px;top:445px;" width="16" height="16"><circle cx="8" cy="8" r="2.2" fill="#fff" stroke="#1878e0" stroke-width="1.300"/></svg>
<svg style="left:30px;top:472px;" width="16" height="16"><path d="M1 14.500 L13 2" stroke="#111" stroke-width="1.600"/><circle cx="9" cy="7" r="2" fill="#fff" stroke="#1878e0" stroke-width="1.300"/><circle cx="13" cy="11.500" r="2" fill="#fff" stroke="#555" stroke-width="1"/></svg>
<svg style="left:30px;top:494px;" width="16" height="16"><path d="M2.500 15 V7 C2.500 0 12.500 0 12.500 7 V12" stroke="#777" stroke-width="3.200" fill="none"/><path d="M2.500 15 V7 C2.500 0 12.500 0 12.500 7 V12" stroke="#bbb" stroke-width="1" fill="none"/><path d="M1 15 L15 2" stroke="#e82020" stroke-width="1.800"/><rect x="12.500" y="12.500" width="3" height="3" fill="#fff" stroke="#555" stroke-width="1"/></svg>
<svg style="left:30px;top:523px;" width="16" height="16"><path d="M2.500 14 V6.500 C2.500 0 11.500 0 11.500 6.500 V11" stroke="#b01828" stroke-width="3.400" fill="none"/><path d="M2 13 V6.500 C2 1.500 10 0.500 11 5" stroke="#e87080" stroke-width="1" fill="none"/><rect x="12.500" y="12.500" width="3" height="3" fill="#fff" stroke="#1878e0" stroke-width="1.200"/></svg><svg style="left:951px;top:140px;" width="16" height="16"><rect x="0.500" y="1.500" width="14" height="9.500" fill="#fff" stroke="#111" stroke-width="1.200"/><path d="M4 15.500 L10 4.500 L16 15.500 Z" fill="#fff" stroke="#111" stroke-width="1.100"/><path d="M6.500 11 H13.500" stroke="#111" stroke-width="1.100"/></svg>
<svg style="left:951px;top:169px;" width="16" height="16"><path d="M1.5 6 h8.5 v8 h-8.5 Z M1.5 6 l4 -4 h8.5 l-4 4 M14 2 v8 l-4 4" fill="url(#gc)" stroke="#111" stroke-width="1.1" stroke-linejoin="round"/><path d="M5.500 6 V10 H10" stroke="#88a8d0" stroke-width="0.800" fill="none"/></svg>
<svg style="left:951px;top:190px;" width="16" height="16"><path d="M1 5 L8 1.500 L15 5 V11.500 L8 15 L1 11.500 Z M1 5 L8 8 L15 5 M8 8 V15" fill="#fff" stroke="#111" stroke-width="1.100" stroke-linejoin="round"/></svg>
<svg style="left:951px;top:212px;" width="16" height="16"><ellipse cx="10" cy="14" rx="6" ry="1.800" fill="#999" opacity="0.600"/><circle cx="8" cy="7.500" r="7" fill="url(#gl)" stroke="#4a6a9a" stroke-width="1"/><circle cx="8" cy="7.500" r="7" fill="#6a94c8" opacity="0.550"/><path d="M2 4 C6 9 10 10 15 9 M13 2.500 C10 6 7 11 5 14" stroke="#3a5a8a" stroke-width="1" fill="none"/><ellipse cx="6" cy="4.500" rx="3" ry="2" fill="#fff" opacity="0.600"/></svg>
<svg style="left:951px;top:234px;" width="16" height="16"><circle cx="8" cy="8" r="7.300" fill="url(#gg)"/></svg>
<svg style="left:951px;top:262px;" width="16" height="16"><circle cx="6.500" cy="7" r="6.300" fill="url(#gl)" stroke="#4a6a9a" stroke-width="0.800"/><circle cx="6.500" cy="7" r="6.300" fill="#587898" opacity="0.550"/><ellipse cx="5" cy="4.500" rx="2.800" ry="1.800" fill="#fff" opacity="0.500"/><rect x="8.500" y="4.500" width="7" height="11" fill="#e8f0fa" stroke="#1d4f9c" stroke-width="1.300"/><rect x="8.500" y="4.500" width="7" height="2" fill="#1d4f9c"/><path d="M10.500 9 h3 M10.500 11 h3 M10.500 13 h3" stroke="#3a6ab0" stroke-width="1" stroke-dasharray="1 1"/></svg>
<svg style="left:977px;top:140px;" width="16" height="16"><ellipse cx="5.500" cy="8" rx="5" ry="4.800" fill="#88b0c0" stroke="#3a6a98" stroke-width="1.300"/><ellipse cx="11" cy="8" rx="5" ry="4.800" fill="#88b0c0" stroke="#3a6a98" stroke-width="1.300"/><ellipse cx="5.500" cy="8" rx="5" ry="4.800" fill="none" stroke="#3a6a98" stroke-width="1.300"/><path d="M8.250 4 C10 6 10 10 8.250 12 C6.500 10 6.500 6 8.250 4 Z" fill="#88b0c0"/></svg>
<svg style="left:977px;top:162px;" width="16" height="16"><ellipse cx="5.500" cy="8" rx="5" ry="4.800" fill="#88b0c0" stroke="#3a6a98" stroke-width="1.300"/><ellipse cx="11" cy="8" rx="5" ry="4.800" fill="#e4ecf0" stroke="#3a6a98" stroke-width="1.300"/><ellipse cx="5.500" cy="8" rx="5" ry="4.800" fill="none" stroke="#3a6a98" stroke-width="1.300"/></svg>
<svg style="left:977px;top:184px;" width="16" height="16"><ellipse cx="5.500" cy="8" rx="5" ry="4.800" fill="#e4ecf0" stroke="#3a6a98" stroke-width="1.300"/><ellipse cx="11" cy="8" rx="5" ry="4.800" fill="#e4ecf0" stroke="#3a6a98" stroke-width="1.300"/><ellipse cx="5.500" cy="8" rx="5" ry="4.800" fill="none" stroke="#3a6a98" stroke-width="1.300"/><path d="M8.250 4 C10 6 10 10 8.250 12 C6.500 10 6.500 6 8.250 4 Z" fill="#88b0c0" stroke="#3a6a98" stroke-width="0.800"/></svg>
<svg style="left:977px;top:212px;" width="16" height="16"><path d="M0.7 6 h7 v9 h-7 Z M0.7 6 l3 -3 h7 l-3 3 M10.7 3 v9 l-3 3" fill="url(#gc)" stroke="#111" stroke-width="1.4" stroke-linejoin="round"/><path d="M13.500 14 V4" stroke="#1d3f7c" stroke-width="1.800"/><path d="M13.500 0.500 l-2.500 4.500 h5 z" fill="#1d3f7c"/></svg>
<svg style="left:977px;top:234px;" width="16" height="16"><path d="M0.7 10 h5 v5 h-5 Z M0.7 10 l2.5 -2.5 h5 l-2.5 2.5 M8.2 7.5 v5 l-2.5 2.5" fill="#78a8e0" stroke="#111" stroke-width="1.2" stroke-linejoin="round"/><path d="M11.500 0.500 v8 M7.500 4.500 h8" stroke="#2b5fa6" stroke-width="1.100"/><path d="M11.500 0 l-1.500 2 h3 z M11.500 9 l-1.500 -2 h3 z M7 4.500 l2 -1.500 v3 z M16 4.500 l-2 -1.500 v3 z" fill="#2b5fa6"/></svg>
<svg style="left:977px;top:256px;" width="16" height="16"><path d="M1 5 h10 v10 h-10 Z M1 5 l4 -4 h10 l-4 4 M15 1 v10 l-4 4" fill="#3a70b8" stroke="#0c2858" stroke-width="1.3" stroke-linejoin="round"/><rect x="3" y="7" width="6" height="6" fill="#e8f0fa" stroke="#0c2858" stroke-width="0.800"/></svg>
<svg style="left:977px;top:278px;" width="16" height="16"><path d="M1 5 h10 v10 h-10 Z M1 5 l4 -4 h10 l-4 4 M15 1 v10 l-4 4" fill="url(#gc)" stroke="#111" stroke-width="1.4" stroke-linejoin="round"/><path d="M3 7.500 L9 13 M9 7.500 L3 13" stroke="#e82030" stroke-width="2"/></svg>
<svg style="left:977px;top:300px;" width="16" height="16"><path d="M3 9 C0 2 8 -1 12 2.500 C16 6 14 12 10 13" stroke="#1d4f9c" stroke-width="1.800" fill="none"/><path d="M1 3 l4.500 0.500 l-3 3.500 z" fill="#1d4f9c"/><path d="M3.5 8.5 h6 v6 h-6 Z M3.5 8.5 l2.5 -2.5 h6 l-2.5 2.5 M12 6 v6 l-2.5 2.5" fill="url(#gc)" stroke="#111" stroke-width="1.2" stroke-linejoin="round"/></svg>
<svg style="left:977px;top:322px;" width="16" height="16"><path d="M1 15 L3 6 L8 4 L11 5.500 L13 13 L10 15 Z" fill="url(#gc)" stroke="#111" stroke-width="1.400"/><path d="M3 6 L6 8 L8 15 M6 8 L11 5.500" stroke="#111" stroke-width="1.200" fill="none"/><path d="M8 4 L11 5.500 L13 13 L10 11 Z" fill="#5a8ac8"/><path d="M14 8 L11.500 2" stroke="#1d3f7c" stroke-width="1.500"/><path d="M10.500 0 l0.500 4 l3 -1.500 z" fill="#1d3f7c"/></svg>
<svg style="left:977px;top:344px;" width="16" height="16"><path d="M7 5.5 h5.5 v5.5 h-5.5 Z M7 5.5 l2.5 -2.5 h5.5 l-2.5 2.5 M15 3 v5.5 l-2.5 2.5" fill="url(#gc)" stroke="#111" stroke-width="1.2" stroke-linejoin="round"/><path d="M1 9 h6 v6 h-6 Z M1 9 l2.5 -2.5 h6 l-2.5 2.5 M9.5 6.5 v6 l-2.5 2.5" fill="#5a98d8" stroke="#111" stroke-width="1.3" stroke-linejoin="round"/><path d="M6 1 C3 1 2 3 2.500 5" stroke="#1d3f7c" stroke-width="1.500" fill="none"/><path d="M0.500 4 l2.500 3.500 l1.500 -3.500 z" fill="#1d3f7c"/></svg>
<svg style="left:977px;top:366px;" width="16" height="16"><rect x="0.500" y="1.500" width="2.800" height="2.800" fill="#2878e0" stroke="#111" stroke-width="0.800"/><rect x="0.500" y="6.500" width="2.800" height="2.800" fill="#38c068" stroke="#111" stroke-width="0.800"/><rect x="0.500" y="11.500" width="2.800" height="2.800" fill="#e85050" stroke="#111" stroke-width="0.800"/><path d="M6 5.5 h6.5 v7 h-6.5 Z M6 5.5 l3 -3 h6.5 l-3 3 M15.5 2.5 v7 l-3 3" fill="#38a868" stroke="#111" stroke-width="1.2" stroke-linejoin="round"/></svg>
<svg style="left:977px;top:395px;" width="16" height="16"><path d="M1 6 V15" stroke="#111" stroke-width="1.500"/><path d="M7 1 C4 1 2 2 1.500 4" stroke="#1d3f7c" stroke-width="1.400" fill="none"/><path d="M0 2.500 l1.500 3.500 l2 -3 z" fill="#1d3f7c"/><path d="M4.5 7 h7 v8 h-7 Z M4.5 7 l3 -3 h7 l-3 3 M14.5 4 v8 l-3 3" fill="#5a98d8" stroke="#111" stroke-width="1.3" stroke-linejoin="round"/></svg>
<svg style="left:977px;top:415px;" width="16" height="16"><rect x="0.500" y="1.500" width="2.800" height="2.800" fill="#2878e0" stroke="#111" stroke-width="0.800"/><rect x="0.500" y="6.500" width="2.800" height="2.800" fill="#38c068" stroke="#111" stroke-width="0.800"/><rect x="0.500" y="11.500" width="2.800" height="2.800" fill="#e85050" stroke="#111" stroke-width="0.800"/><path d="M6 5.5 h6.5 v7 h-6.5 Z M6 5.5 l3 -3 h6.5 l-3 3 M15.5 2.5 v7 l-3 3" fill="url(#gc)" stroke="#111" stroke-width="1.2" stroke-linejoin="round"/><path d="M12.500 6 V12.500" stroke="#e82020" stroke-width="1.600"/></svg>
<svg style="left:977px;top:444px;" width="16" height="16"><path d="M1 3 L8 1 V11 L1 13 Z" fill="#c8d8ec"/><path d="M8 1 L12 3 V6 M8 11 L12 13 V10" fill="none" stroke="#e03040" stroke-width="1.200"/><path d="M8 1 V11" stroke="#e03040" stroke-width="1.200"/><path d="M13 7 v6 M10 10 h6" stroke="#1d4f9c" stroke-width="1.600"/></svg>
<svg style="left:977px;top:467px;" width="16" height="16"><path d="M0.500 6 L6 3 H12 L7 7 V14 H0.500 Z" fill="#a8b8cc" stroke="#788" stroke-width="0.800"/><path d="M7 7 L12 3 V10 L7 14 Z" fill="#8898b0"/><path d="M10.500 0.500 v6" stroke="#a05810" stroke-width="2"/><path d="M8 7 h5 l2.500 8 h-10 z" fill="#f0b830" stroke="#a87010" stroke-width="0.800"/><path d="M8 10 v5 M10.500 9 v6 M13 10 v5" stroke="#a87010" stroke-width="0.800"/><rect x="8" y="6" width="5" height="2" fill="#d03020"/></svg>
<svg style="left:977px;top:489px;" width="16" height="16"><rect x="1" y="4" width="5" height="9.500" rx="2" fill="#5a98d8" stroke="#111" stroke-width="1.300"/><rect x="10" y="4" width="5" height="9.500" rx="2" fill="#5a98d8" stroke="#111" stroke-width="1.300"/><path d="M8 1 V16" stroke="#111" stroke-width="1.200" stroke-dasharray="2.500 1.500"/></svg>
<svg style="left:977px;top:511px;" width="16" height="16"><path d="M0.7 4 h11 v11 h-11 Z M0.7 4 l3.5 -3.5 h11 l-3.5 3.5 M15.2 0.5 v11 l-3.5 3.5" fill="#78a8d8" stroke="#111" stroke-width="1.4" stroke-linejoin="round"/><rect x="3" y="6.500" width="6.500" height="6.500" fill="#c8dcf0" stroke="#111" stroke-width="1"/><rect x="5" y="8.500" width="2.500" height="2.500" fill="#e8f0fa" stroke="#345" stroke-width="0.700"/></svg>
<svg style="left:977px;top:532px;" width="16" height="16"><path d="M5 5 h7 v7 h-7 Z M5 5 l3 -3 h7 l-3 3 M15 2 v7 l-3 3" fill="url(#gc)" stroke="#111" stroke-width="1.3" stroke-linejoin="round"/><path d="M0.500 10 L4 13.500 L10 7" stroke="#189838" stroke-width="2.400" fill="none"/></svg>
<svg style="left:1003px;top:139px;" width="16" height="16"><path d="M0 15.500 H16" stroke="#333" stroke-width="1"/><path d="M13 0.500 L16 3 L7 13 L3 12.500 Z" fill="#f0c020" stroke="#a88000" stroke-width="0.600"/><path d="M3 12.500 L7 13 L5 15 L1.500 14 Z" fill="#e86868"/><path d="M13 0.500 L16 3 L15 4.200 L12 1.700 Z" fill="#f8e080"/><path d="M4 11 L8 12" stroke="#ddd" stroke-width="1.200"/></svg>
<svg style="left:1003px;top:161px;" width="16" height="16"><circle cx="3.500" cy="4" r="3" fill="url(#gc)" stroke="#222" stroke-width="1.200"/><circle cx="9" cy="10.500" r="3.200" fill="url(#gc)" stroke="#222" stroke-width="1.200"/><circle cx="12.500" cy="12.500" r="3.200" fill="url(#gc)" stroke="#222" stroke-width="1.200"/><path d="M7 3 C11 1 14 3 14 6" stroke="#1d4f9c" stroke-width="1.600" fill="none"/><path d="M11.500 5.500 h5 l-2.500 3.500 z" fill="#1d4f9c"/></svg>
<svg style="left:1003px;top:184px;" width="16" height="16"><path d="M1 14.500 H6.500 V3 Z" fill="url(#gc)" stroke="#111" stroke-width="1.300"/><path d="M15.500 14.500 H10 V3 Z" fill="url(#gc)" stroke="#111" stroke-width="1.300"/><path d="M8.250 0 V16" stroke="#1878e0" stroke-width="1.300"/></svg>
<svg style="left:1003px;top:206px;" width="16" height="16"><path d="M1.500 13 C0 9 3 7.500 5.500 8 C4 2.500 11.500 1.500 11 7 H15.500 V14 H3 Z" fill="#fff" stroke="#111" stroke-width="1.400"/><path d="M4 11.500 C4 10.500 5.500 10.500 7.500 11 C6.500 6 9 5.500 9 9 V10.500 H15" fill="none" stroke="#1878e0" stroke-width="1.200"/></svg>
<svg style="left:1003px;top:228px;" width="16" height="16"><rect x="1" y="1" width="5.500" height="5.500" fill="url(#gc)" stroke="#111" stroke-width="1.400"/><rect x="1" y="9.5" width="5.500" height="5.500" fill="url(#gc)" stroke="#111" stroke-width="1.400"/><rect x="9.5" y="1" width="5.500" height="5.500" fill="url(#gc)" stroke="#111" stroke-width="1.400"/><rect x="9.5" y="9.5" width="5.500" height="5.500" fill="url(#gc)" stroke="#111" stroke-width="1.400"/></svg>
<svg style="left:1003px;top:250px;" width="16" height="16"><path d="M8 1 V15 M1 8 H15" stroke="#2b5fa6" stroke-width="2"/><path d="M8 -0.500 l-3 3.500 h6 z M8 16.500 l-3 -3.500 h6 z M-0.500 8 l3.500 -3 v6 z M16.500 8 l-3.500 -3 v6 z" fill="#2b5fa6"/></svg>
<svg style="left:1003px;top:272px;" width="16" height="16"><path d="M5 3.500 C0 7 2 14.500 8 14.500 C14 14.500 16 7 11 3.500" stroke="#2b5fa6" stroke-width="2" fill="none"/><path d="M8.500 0 l3.500 5.500 l-6 0.500 z" fill="#2b5fa6" transform="rotate(20 9 3)"/></svg>
<svg style="left:1003px;top:294px;" width="16" height="16"><rect x="0.500" y="0.500" width="15" height="15" fill="url(#gc)" stroke="#4a78b8" stroke-width="1.200"/><rect x="0.500" y="6.500" width="9" height="9" fill="#f0f4fa" stroke="#111" stroke-width="1.200" stroke-dasharray="1.300 1.300"/></svg>
<svg style="left:1003px;top:316px;" width="16" height="16"><path d="M0.500 0.500 H8 L15.500 15.500 H0.500 Z" fill="url(#gc)" stroke="#2b5fa6" stroke-width="1.300"/><path d="M0.500 0.500 V15.500 H7 V0.500 Z" fill="#f4f7fb" stroke="#111" stroke-width="1.300"/><path d="M7 1 V15" stroke="#111" stroke-width="1.200" stroke-dasharray="1.500 1.500"/></svg>
<svg style="left:1003px;top:338px;" width="16" height="16"><path d="M0 8.500 H7" stroke="#111" stroke-width="1.400"/><path d="M9 8.500 H16" stroke="#1878e0" stroke-width="1.300" stroke-dasharray="2 1.200"/><path d="M5 14 L11 2" stroke="#1878e0" stroke-width="1.500"/></svg>
<svg style="left:1003px;top:360px;" width="16" height="16"><path d="M0 9.500 H5" stroke="#111" stroke-width="1.400"/><path d="M6 9.500 H11" stroke="#111" stroke-width="1.300" stroke-dasharray="2 1.200"/><path d="M10 15 L16 3" stroke="#1878e0" stroke-width="1.500"/></svg>
<svg style="left:1003px;top:382px;" width="16" height="16"><rect x="1" y="3.500" width="14" height="10.500" fill="url(#gc)" stroke="#111" stroke-width="1.500"/><rect x="8.5" y="2" width="3" height="3" fill="#2b5fa6"/></svg>
<svg style="left:1003px;top:404px;" width="16" height="16"><path d="M5 3.500 H1 V14 H15 V3.500 H11" fill="url(#gc)" stroke="#111" stroke-width="1.500"/><rect x="4" y="2" width="3" height="3" fill="#2b5fa6"/><rect x="9" y="2" width="3" height="3" fill="#2b5fa6"/></svg>
<svg style="left:1003px;top:426px;" width="16" height="16"><path d="M0 8 H16" stroke="#111" stroke-width="1.800"/><path d="M4 4.500 L8 8 L4 11.500 Z M12 4.500 L8 8 L12 11.500 Z" fill="#1d4f9c"/><path d="M3 4 L8 8 L3 12 M13 4 L8 8 L13 12" stroke="#111" stroke-width="1" fill="none"/></svg>
<svg style="left:1003px;top:447px;" width="16" height="16"><path d="M1 1.500 H15" stroke="#111" stroke-width="1" stroke-dasharray="1 1.500"/><path d="M1.500 1.500 V15.500 M8 1.500 H15.500" stroke="#111" stroke-width="1.600"/><path d="M1.500 10 L8 1.500" stroke="#1878e0" stroke-width="1.600"/></svg>
<svg style="left:1003px;top:469px;" width="16" height="16"><path d="M1 1.500 H15" stroke="#111" stroke-width="1" stroke-dasharray="1 1.500"/><path d="M1.500 9 V15.500 M9 1.500 H15.500" stroke="#111" stroke-width="1.600"/><path d="M1.500 10 C1.500 4 4 1.500 10 1.500" stroke="#1878e0" stroke-width="1.700" fill="none"/></svg>
<svg style="left:1003px;top:492px;" width="16" height="16"><path d="M1 15 L3 9 L7 13 Z" fill="#e82020"/><path d="M3 8 L7 4 L11 8 L7 12 Z" fill="#d03020" stroke="#801010" stroke-width="0.700"/><path d="M5 10 l3 -3" stroke="#f8d020" stroke-width="1.500"/><path d="M9 6 L15 0.500" stroke="#8898a8" stroke-width="1.500"/><path d="M12 1 l1 3 M15 3 l-3 1 M10 2.500 l2 1.500 M14 6 l-2 -1.500" stroke="#556" stroke-width="0.800"/><path d="M2 6 l2 1 M1.500 11 h2 M8 13.500 l1 2" stroke="#e8a020" stroke-width="1"/></svg>
<svg style="left:1003px;top:532px;" width="16" height="16"><rect x="0.5" y="0.5" width="10" height="9" fill="url(#gc)" stroke="#2b5fa6" stroke-width="1"/><rect x="5.5" y="6.5" width="10" height="9" fill="url(#gc)" stroke="#2b5fa6" stroke-width="1"/><rect x="3" y="3.500" width="10" height="9" fill="#5a86c0" stroke="#2b5fa6" stroke-width="1" opacity="0.920"/></svg>
<svg style="left:1003px;top:554px;" width="16" height="16"><rect x="0.500" y="0.500" width="8" height="7" fill="url(#gc)" stroke="#2b5fa6" stroke-width="1"/><rect x="3.500" y="4" width="9" height="8" fill="#4a78b0" stroke="#2b5fa6" stroke-width="1"/><rect x="8" y="9" width="7.500" height="6.500" fill="url(#gc)" stroke="#2b5fa6" stroke-width="1"/></svg>
<svg style="left:1003px;top:576px;" width="16" height="16"><rect x="4.5" y="6.5" width="10" height="9" fill="url(#gc)" stroke="#2b5fa6" stroke-width="1"/><rect x="0.5" y="1.5" width="10" height="9" fill="#4a78b0" stroke="#2b5fa6" stroke-width="1"/></svg>
<svg style="left:1003px;top:597px;" width="16" height="16"><rect x="0.5" y="1.5" width="10" height="9" fill="#4a78b0" stroke="#2b5fa6" stroke-width="1"/><rect x="4.5" y="6.5" width="10" height="9" fill="url(#gc)" stroke="#2b5fa6" stroke-width="1"/></svg>
</body>
</html>
